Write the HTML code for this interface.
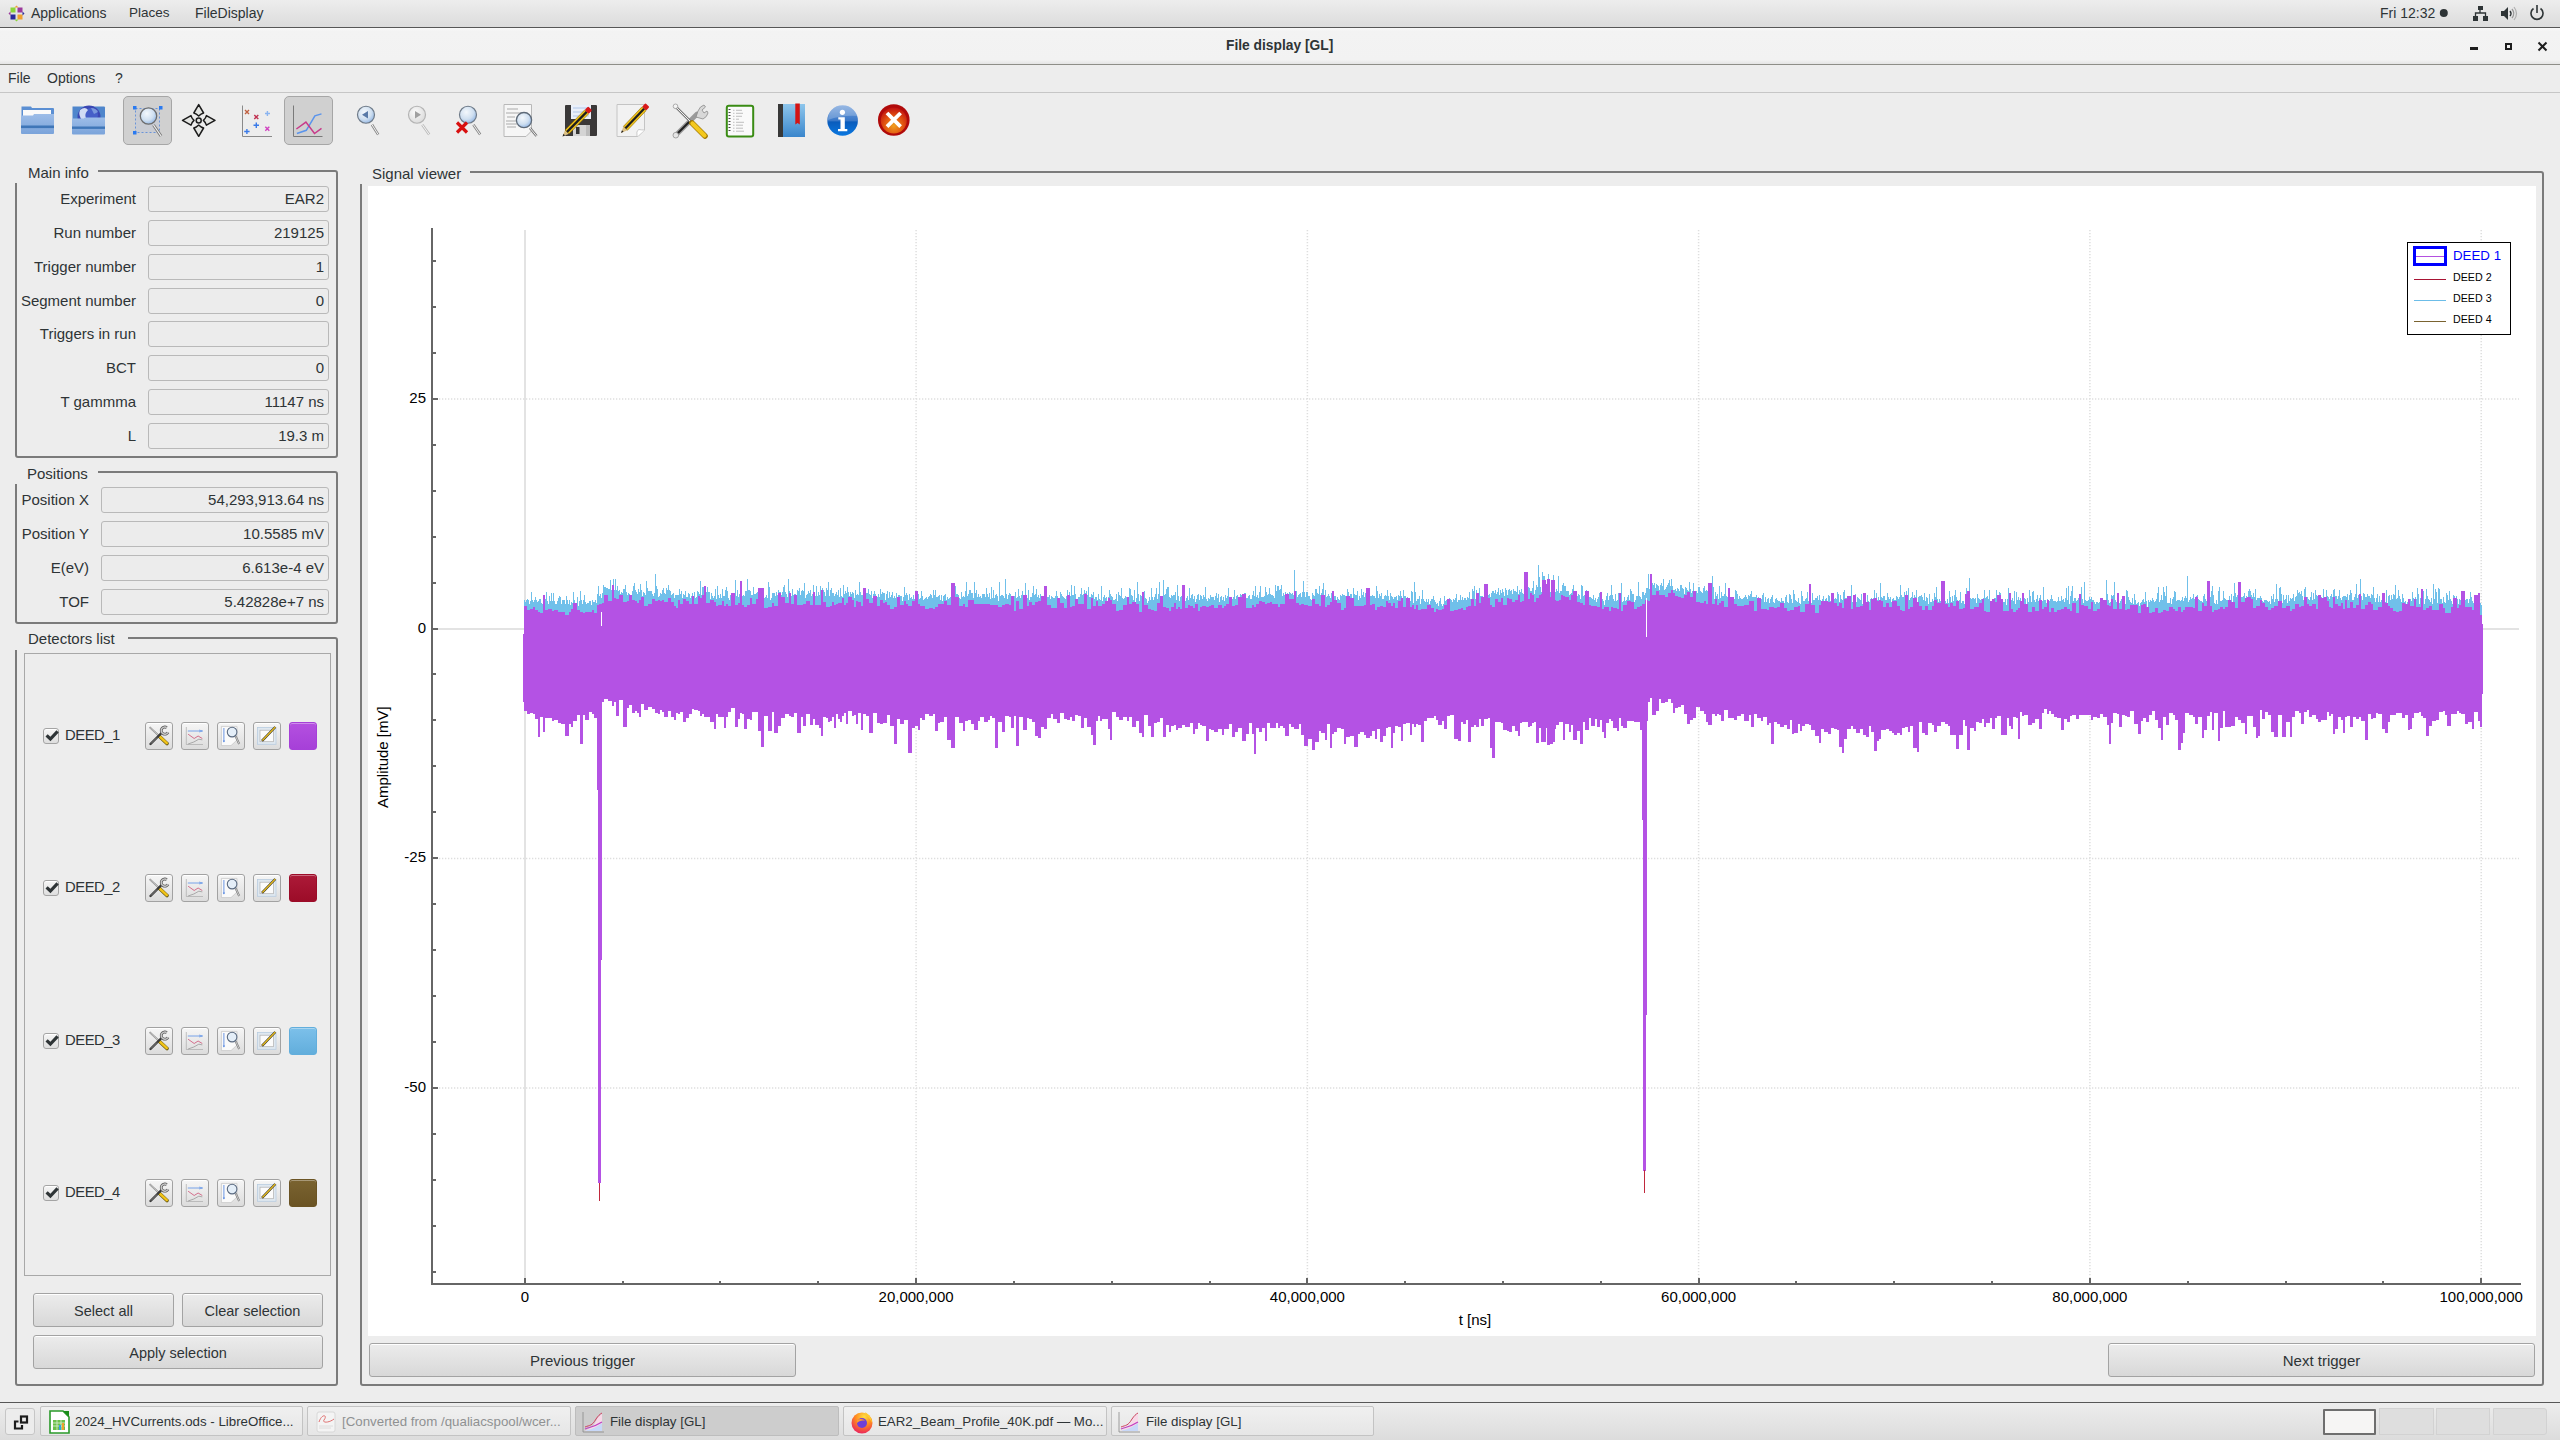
<!DOCTYPE html>
<html><head><meta charset="utf-8">
<style>
*{box-sizing:border-box;margin:0;padding:0}
html,body{width:2560px;height:1440px;overflow:hidden;background:#ededed;font-family:"Liberation Sans",sans-serif;color:#2e3436;font-size:14.5px}
.a{position:absolute}
.ui{font-size:15px}
.t{position:absolute;white-space:pre;line-height:1}
#toppanel{left:0;top:0;width:2560px;height:27px;background:linear-gradient(#ededed,#dcdcdc)}
#tpline{left:0;top:27px;width:2560px;height:1px;background:#575757}
#titlebar{left:0;top:28px;width:2560px;height:36px;background:linear-gradient(#fafafa 0,#f3f3f3 3px,#f2f2f2 32px,#e4e4e4 36px)}
#tbline{left:0;top:64px;width:2560px;height:1px;background:#8e8e88}
#mbline{left:0;top:92px;width:2560px;height:1px;background:#c6c6c6}
.gb{position:absolute;border:2px solid #7b7b7b;border-radius:3px}
.gbt{position:absolute;background:#ededed;white-space:pre;line-height:1;padding:0 0 0 0}
.fld{position:absolute;border:1px solid #b9b9b9;border-radius:3px;background:#ececec;text-align:right;padding-right:4px;white-space:pre;line-height:24px;color:#2e3436}
.lbl{position:absolute;text-align:right;white-space:pre;line-height:1}
.btn{position:absolute;border:1px solid #a3a3a3;border-radius:3px;background:linear-gradient(#ececec,#d8d8d8);box-shadow:inset 0 1px 0 #fff;text-align:center;white-space:pre;color:#2e3436}
.tb{position:absolute;border:1.5px solid #a6a6a6;border-radius:5px;background:#d0d0d0}
.sb{position:absolute;width:28px;height:28px;border:1px solid #a2a2a2;border-radius:3px;background:linear-gradient(#f6f6f6,#dcdcdc);box-shadow:inset 0 1px 0 #fff}
.cb{position:absolute;width:16px;height:16px;border:1px solid #a4a4a4;border-radius:3px;background:linear-gradient(#f6f6f6,#dedede);box-shadow:inset 0 1px 0 #fff}
.col{position:absolute;width:28px;height:28px;border-radius:3px}
.task{position:absolute;top:1408px;height:27px;border:1px solid #c3c3c3;border-radius:2px;background:linear-gradient(#f0f0f0,#e6e6e6);font-size:13.3px;white-space:pre;line-height:25px;color:#2e3436}
</style></head><body>
<!-- top panel -->
<div class="a" id="toppanel"></div>
<div class="a" id="tpline"></div>
<div class="t" style="left:31px;top:6px;font-size:14px">Applications</div>
<div class="t" style="left:129px;top:6px;font-size:13.5px">Places</div>
<div class="t" style="left:195px;top:6px;font-size:14px">FileDisplay</div>
<div class="t" style="left:2380px;top:6px;font-size:14px">Fri 12:32</div>
<!-- title bar -->
<div class="a" id="titlebar"></div>
<div class="t" style="left:1226px;top:39px;font-size:13.8px;font-weight:bold">File display [GL]</div>
<div class="a" id="tbline"></div>
<!-- menubar -->
<div class="t" style="left:8px;top:71px;font-size:14px">File</div>
<div class="t" style="left:47px;top:71px;font-size:14px">Options</div>
<div class="t" style="left:115px;top:71px;font-size:14px">?</div>
<div class="a" id="mbline"></div>
<div class="tb" style="left:123px;top:96px;width:49px;height:49px"></div>
<div class="tb" style="left:284px;top:96px;width:49px;height:49px"></div>
<svg class="a" style="left:0;top:93px" width="930" height="57" viewBox="0 93 930 57">
<defs>
<linearGradient id="fold" x1="0" y1="0" x2="0" y2="1"><stop offset="0" stop-color="#9dbde8"/><stop offset="1" stop-color="#7aa3da"/></linearGradient>
<radialGradient id="lens" cx="0.4" cy="0.35" r="0.7"><stop offset="0" stop-color="#f4f8fc"/><stop offset="0.6" stop-color="#cfdff0"/><stop offset="1" stop-color="#8fb4e4"/></radialGradient>
<radialGradient id="lensg" cx="0.4" cy="0.35" r="0.7"><stop offset="0" stop-color="#fafafa"/><stop offset="1" stop-color="#dadada"/></radialGradient>
<linearGradient id="info" x1="0" y1="0" x2="0" y2="1"><stop offset="0" stop-color="#7aa4dc"/><stop offset="0.5" stop-color="#3a78c8"/><stop offset="0.55" stop-color="#0a5cbc"/><stop offset="1" stop-color="#0a78e0"/></linearGradient>
<radialGradient id="closeg" cx="0.5" cy="0.7" r="0.7"><stop offset="0" stop-color="#f0a020"/><stop offset="0.55" stop-color="#e05010"/><stop offset="1" stop-color="#c01010"/></radialGradient>
</defs>
<!-- folder 1 -->
<path d="M21.5 106.5 H31 L32 108 H53 Q54 108 54 109 V124 H21.5Z" fill="#5b8fd3"/>
<rect x="23" y="110" width="28" height="6" fill="#fafafa"/>
<path d="M21 115.5 H33 L34 114 H54 V133 Q54 134 53 134 H22 Q21 134 21 133Z" fill="url(#fold)"/>
<rect x="21" y="125.5" width="33" height="2.6" fill="#3f76b8"/>
<!-- folder 2 globe -->
<path d="M72.5 106.5 H104 Q105 106.5 105 107.5 V120 H72.5Z" fill="#4f86cc"/>
<circle cx="89" cy="117" r="11.5" fill="#3c48b4"/><circle cx="91" cy="115" r="7" fill="#4a6ad0" fill-opacity="0.7"/>
<path d="M80 110 Q85 106 88 110 Q84 114 86 118 L82 120 Q78 115 80 110Z" fill="#d0dcf4"/>
<path d="M91 108 Q96 108 98 112 L94 114Z" fill="#7a98dc"/>
<path d="M72 118.5 H84 L85 117.5 H105 V133.5 Q105 134.5 104 134.5 H73 Q72 134.5 72 133.5Z" fill="url(#fold)"/>
<rect x="72" y="126.5" width="33" height="2.4" fill="#3f76b8"/>
<!-- zoom rect -->
<rect x="135.5" y="108.5" width="24" height="24" fill="#c6cad4" fill-opacity="0.7" stroke="#6a94d8" stroke-width="1" stroke-dasharray="2 2"/>
<rect x="133" y="106" width="3.5" height="3.5" fill="#2a7af0"/><rect x="159" y="106" width="3.5" height="3.5" fill="#2a7af0"/><rect x="133" y="131" width="3.5" height="3.5" fill="#2a7af0"/>
<path d="M153.5 125 L161 136" stroke="#777" stroke-width="3"/><path d="M153.5 125 L161 136" stroke="#f2f2f2" stroke-width="1.2"/>
<circle cx="148.5" cy="116" r="8.2" fill="url(#lens)" stroke="#6c6c6c" stroke-width="1.3"/>
<!-- move -->
<g fill="#e4e5e2" stroke="#1c1c1c" stroke-width="1.5" stroke-linejoin="round">
<path d="M198.7 104.6 L203.6 113 Q201 113.6 198.7 116 Q196.4 113.6 193.8 113Z"/>
<path d="M198.7 136.3 L203.6 128 Q201 127.4 198.7 125 Q196.4 127.4 193.8 128Z"/>
<path d="M182.5 120.4 L191 115.6 Q191.6 118.2 194 120.4 Q191.6 122.6 191 125.2Z"/>
<path d="M215 120.4 L206.4 115.6 Q205.8 118.2 203.4 120.4 Q205.8 122.6 206.4 125.2Z"/>
<circle cx="198.7" cy="120.4" r="2.5"/>
</g>
<!-- scatter -->
<path d="M242.5 105.5 V136.5 H272" stroke="#8a8a8a" stroke-width="1" fill="none"/>
<g stroke-width="1.4"><path d="M245 110 L249 114 M249 110 L245 114" stroke="#c06040"/><path d="M254.3 115 L258.3 119 M258.3 115 L254.3 119" stroke="#c03050"/><path d="M267.4 111 V116 M265 113.5 H270" stroke="#8ab4f0"/><path d="M256.3 122.5 V128 M253.5 125.25 H259" stroke="#3a7ae8"/><path d="M246.9 129 V134 M244.2 131.5 H249.6" stroke="#3a7ae8"/><path d="M265.3 126.8 L269.3 130.8 M269.3 126.8 L265.3 130.8" stroke="#d040c0"/></g>
<!-- line chart -->
<path d="M293.5 105.5 V136.5 H322.5" stroke="#7a7a7a" stroke-width="1" fill="none"/>
<path d="M296.9 133.5 L306.3 130.3 L314.9 115.9 L321.5 113.9" stroke="#5a94ec" stroke-width="1.5" fill="none"/>
<path d="M296.4 129 L305.9 122.1 L314.5 133.5 L321.5 128.4" stroke="#c83a8a" stroke-width="1.5" fill="none"/>
<!-- zoom back -->
<path d="M372 124.7 L378.2 134.6" stroke="#888" stroke-width="2.6"/><path d="M372 124.7 L378.2 134.6" stroke="#f4f4f4" stroke-width="1"/>
<circle cx="366" cy="114.75" r="8.5" fill="url(#lens)" stroke="#6e7a88" stroke-width="1.2"/>
<path d="M362 114.75 L368 111 V118.5Z" fill="#5a7aa8"/>
<!-- zoom fwd disabled -->
<path d="M422.3 124.7 L429.2 134.6" stroke="#bbb" stroke-width="2.6"/><path d="M422.3 124.7 L429.2 134.6" stroke="#f6f6f6" stroke-width="1"/>
<circle cx="417" cy="114.75" r="8.5" fill="url(#lensg)" stroke="#b4b4b4" stroke-width="1.2"/>
<path d="M421 114.75 L415 111 V118.5Z" fill="#a0a0a0"/>
<!-- zoom clear -->
<path d="M473.4 124.7 L480.2 134.6" stroke="#888" stroke-width="2.6"/><path d="M473.4 124.7 L480.2 134.6" stroke="#f4f4f4" stroke-width="1"/>
<circle cx="468" cy="114.75" r="8.5" fill="url(#lens)" stroke="#6e7a88" stroke-width="1.2"/>
<path d="M457 122.5 L467 132.5 M467 122.5 L457 132.5" stroke="#d81010" stroke-width="3.2"/>
<!-- doc zoom -->
<path d="M504 104.5 H531.5 V131 L526 136.5 H504Z" fill="#f6f6f6" stroke="#b8b8b8" stroke-width="1"/>
<g stroke="#8a8a8a" stroke-width="0.7"><path d="M507 109H518M506 113H522M507 117H515M506 121H518M506 124H517M507 127H516"/></g>
<path d="M530 128 L536.5 136" stroke="#777" stroke-width="2.6"/><path d="M530 128 L536.5 136" stroke="#eee" stroke-width="1"/>
<circle cx="524" cy="120.1" r="7.6" fill="url(#lens)" stroke="#5e6a78" stroke-width="1.3"/>
<!-- floppy pencil -->
<path d="M566 105 H596 Q597 105 597 106 V135 Q597 136 596 136 H566 Q565 136 565 135 V106 Q565 105 566 105Z" fill="#3a3838"/>
<rect x="571" y="105" width="20" height="14" fill="#eaf0fa"/>
<path d="M573 108H589M573 112H589M573 116H589" stroke="#9ab4e0" stroke-width="0.7"/>
<rect x="573" y="125" width="17" height="11" fill="#d4d4d4"/><rect x="576" y="127" width="3.5" height="7" fill="#333"/><rect x="586" y="125" width="4" height="11" fill="#bcbcbc"/>
<g transform="translate(562.5,136.5) rotate(-45.5)"><path d="M0 0 L6.5 -2.8 V2.8Z" fill="#dcc084"/><path d="M0 0 L2.6 -1.1 V1.1Z" fill="#222"/><rect x="6.5" y="-2.8" width="28" height="5.6" fill="#f2c418" stroke="#7a5a00" stroke-width="0.5"/><rect x="6.5" y="-1.1" width="28" height="2.2" fill="#1e1e1e"/><rect x="34.5" y="-2.8" width="5" height="5.6" rx="1.2" fill="#d81818"/></g>
<!-- pencil doc -->
<path d="M617 104.5 H644.5 V130 L638 136.5 H617Z" fill="#f2f2f2" stroke="#c4c4c4" stroke-width="1"/>
<path d="M637 136.5 Q636 131 638.5 129.5 Q642 130 644.5 130" fill="#ffffff" stroke="#c4c4c4" stroke-width="0.9"/>
<g transform="translate(621,133) rotate(-46.5)"><path d="M0 0 L6.5 -2.8 V2.8Z" fill="#dcc084"/><path d="M0 0 L2.6 -1.1 V1.1Z" fill="#222"/><rect x="6.5" y="-2.8" width="27" height="5.6" fill="#f2c418" stroke="#7a5a00" stroke-width="0.5"/><rect x="6.5" y="-1.1" width="27" height="2.2" fill="#1e1e1e"/><rect x="33.5" y="-2.8" width="5" height="5.6" rx="1.2" fill="#d81818"/></g>
<!-- tools -->
<path d="M676 135 L697 114" stroke="#9a9a9a" stroke-width="4.6" stroke-linecap="round"/><path d="M677 134 L690 121" stroke="#222" stroke-width="2.2"/>
<circle cx="675.8" cy="135.2" r="2.8" fill="#e6e6e6" stroke="#9a9a9a" stroke-width="0.9"/>
<path d="M696 117 L698 111 Q700 106 704 105 L705.5 107 L702 110 L704 113 L707 111 L708 113 Q707 117 703 119 Z" fill="#d8d8d8" stroke="#8a8a8a" stroke-width="0.8"/>
<path d="M675.5 106.5 L692 123" stroke="#7a7a7a" stroke-width="2.6" stroke-linecap="round"/><path d="M675.5 106.5 L692 123" stroke="#f0f0f0" stroke-width="1"/>
<circle cx="675.5" cy="106.3" r="2.3" fill="#f4f4f4" stroke="#9a9a9a" stroke-width="0.8"/>
<path d="M692 123 L705 136" stroke="#a07800" stroke-width="5.6" stroke-linecap="round"/><path d="M692.5 123.5 L704.5 135.5" stroke="#f4c81c" stroke-width="4.2" stroke-linecap="round"/>
<!-- notebook -->
<rect x="726.8" y="105.8" width="26.4" height="30.6" rx="2" fill="#fafafa" stroke="#3a8c14" stroke-width="2"/>
<g stroke="#333" stroke-width="0.9" fill="none"><path d="M728.5 109.5h2M728.5 112.5h2M728.5 115.5h2M728.5 118.5h2M728.5 121.5h2M728.5 124.5h2M728.5 127.5h2M728.5 130.5h2"/></g>
<g stroke="#777" stroke-width="0.45"><path d="M733 110.3h1.5M736 110.3h6M733 113.3h1.5M736 113.3h7M733 116.3h1.5M736 116.3h6M733 119.2h1.5M736 119.2h3M733 122.3h1.5M736 122.3h8M733 125.2h1.5M736 125.2h7M733 128.2h1.5M736 128.2h7M733 131.2h1.5M736 131.2h8"/></g>
<!-- book -->
<defs><linearGradient id="bookg" x1="0" y1="0" x2="0" y2="1"><stop offset="0" stop-color="#8ec6ec"/><stop offset="1" stop-color="#3a86cc"/></linearGradient></defs>
<rect x="778" y="104" width="27" height="33" fill="url(#bookg)"/>
<rect x="778" y="104" width="5" height="33" fill="#383838"/>
<path d="M795.3 103.5 H799.8 V124.5 L797.5 123 L795.3 124.5Z" fill="#d41414"/>
<!-- info -->
<circle cx="842.6" cy="120.5" r="15.3" fill="url(#info)"/>
<path d="M828 120 Q842 115 857.5 116 A15 15 0 0 0 828 120Z" fill="#ffffff" fill-opacity="0.22"/>
<circle cx="842.4" cy="112.3" r="2.6" fill="#fff"/>
<path d="M838.3 117.3 H844.8 V129 H847.3 V131.3 H838 V129 H840.5 V119.6 H838.3Z" fill="#fff"/>
<!-- close -->
<circle cx="893.8" cy="120" r="15.8" fill="#b00a0a"/>
<circle cx="893.8" cy="120.5" r="13" fill="url(#closeg)"/>
<path d="M887 113 L900.6 126.6 M900.6 113 L887 126.6" stroke="#fff" stroke-width="3.8"/>
</svg>

<div class="gb" style="left:15px;top:170px;width:323px;height:288px"></div>
<div class="gbt" style="left:13px;top:166px;width:85px;height:17px"></div>
<div class="t ui" style="left:28px;top:165px">Main info</div>
<div class="lbl ui" style="left:10px;width:126px;top:191px">Experiment</div>
<div class="fld ui" style="left:148px;top:186px;width:181px;height:26px">EAR2</div>
<div class="lbl ui" style="left:10px;width:126px;top:225px">Run number</div>
<div class="fld ui" style="left:148px;top:220px;width:181px;height:26px">219125</div>
<div class="lbl ui" style="left:10px;width:126px;top:259px">Trigger number</div>
<div class="fld ui" style="left:148px;top:254px;width:181px;height:26px">1</div>
<div class="lbl ui" style="left:10px;width:126px;top:293px">Segment number</div>
<div class="fld ui" style="left:148px;top:288px;width:181px;height:26px">0</div>
<div class="lbl ui" style="left:10px;width:126px;top:326px">Triggers in run</div>
<div class="fld ui" style="left:148px;top:321px;width:181px;height:26px"></div>
<div class="lbl ui" style="left:10px;width:126px;top:360px">BCT</div>
<div class="fld ui" style="left:148px;top:355px;width:181px;height:26px">0</div>
<div class="lbl ui" style="left:10px;width:126px;top:394px">T gammma</div>
<div class="fld ui" style="left:148px;top:389px;width:181px;height:26px">11147 ns</div>
<div class="lbl ui" style="left:10px;width:126px;top:428px">L</div>
<div class="fld ui" style="left:148px;top:423px;width:181px;height:26px">19.3 m</div>
<div class="gb" style="left:15px;top:471px;width:323px;height:153px"></div>
<div class="gbt" style="left:13px;top:467px;width:85px;height:17px"></div>
<div class="t ui" style="left:27px;top:466px">Positions</div>
<div class="lbl ui" style="left:10px;width:79px;top:492px">Position X</div>
<div class="fld ui" style="left:101px;top:487px;width:228px;height:26px">54,293,913.64 ns</div>
<div class="lbl ui" style="left:10px;width:79px;top:526px">Position Y</div>
<div class="fld ui" style="left:101px;top:521px;width:228px;height:26px">10.5585 mV</div>
<div class="lbl ui" style="left:10px;width:79px;top:560px">E(eV)</div>
<div class="fld ui" style="left:101px;top:555px;width:228px;height:26px">6.613e-4 eV</div>
<div class="lbl ui" style="left:10px;width:79px;top:594px">TOF</div>
<div class="fld ui" style="left:101px;top:589px;width:228px;height:26px">5.42828e+7 ns</div>
<div class="gb" style="left:15px;top:637px;width:323px;height:749px"></div>
<div class="gbt" style="left:13px;top:633px;width:115px;height:17px"></div>
<div class="t ui" style="left:28px;top:631px">Detectors list</div>
<div class="a" style="left:24px;top:653px;width:307px;height:623px;border:1px solid #a8a8a8"></div>
<div class="cb" style="left:43px;top:728px"><svg width="16" height="14" style="position:absolute;left:0;top:0;overflow:visible"><path d="M2.6 6.4 L6.4 10 L13.6 2.4" stroke="#2e3436" stroke-width="3.2" fill="none" stroke-linecap="butt" stroke-linejoin="miter"/></svg></div>
<div class="t" style="left:65px;top:728px;font-size:14.8px;letter-spacing:-0.45px">DEED_1</div>
<div class="sb" style="left:145px;top:722px"><svg width="28" height="28" style="position:absolute;left:-1px;top:-1px"><path d="M4.6 5.2 L14.8 14.6" stroke="#8a8a8a" stroke-width="1.8"/><path d="M4.6 5.2 L14.8 14.6" stroke="#eee" stroke-width="0.6"/><path d="M14.5 14.5 L22 21.5" stroke="#6a5a10" stroke-width="3.6" stroke-linecap="round"/><path d="M14.8 14.6 L21.8 21.2" stroke="#f2c418" stroke-width="2.4" stroke-linecap="round"/><path d="M5.5 22 L16.5 11" stroke="#3a3a3a" stroke-width="2.4" stroke-linecap="round"/><path d="M6 21.5 L12 15.5" stroke="#999" stroke-width="0.8"/><path d="M21.8 5.6 A3.6 3.6 0 1 0 23 10.3" stroke="#555" stroke-width="2.8" fill="none"/><path d="M21.8 5.6 A3.6 3.6 0 1 0 23 10.3" stroke="#c8c8c8" stroke-width="1.4" fill="none"/></svg>
</div>
<div class="sb" style="left:181px;top:722px"><svg width="28" height="28" style="position:absolute;left:-1px;top:-1px"><path d="M5.3 5 V22.5 H22" stroke="#aaa" stroke-width="0.7" fill="none"/><path d="M6.8 9 H21.5" stroke="#6a9ae8" stroke-width="0.9"/><path d="M18 8 L21.5 9 L18 10" stroke="#6a9ae8" stroke-width="0.7" fill="none"/><path d="M7.1 12.2 L13.2 16.5 L17.1 14 L21.3 16.5" stroke="#d06080" stroke-width="0.9" fill="none"/><path d="M7.1 22 L12.8 20 L17.8 17.2 L21.3 17.9" stroke="#999" stroke-width="0.8" fill="none"/></svg>
</div>
<div class="sb" style="left:217px;top:722px"><svg width="28" height="28" style="position:absolute;left:-1px;top:-1px"><path d="M4.4 4.4 H20 V18 L14 23.6 H4.4Z" fill="#fafafa" stroke="#c8c8c8" stroke-width="0.8"/><path d="M6.9 6 V20" stroke="#5a8ae0" stroke-width="0.9"/><path d="M5.8 18.5 L6.9 20.5 L8 18.5" fill="#5a8ae0"/><path d="M18.5 14 L22.2 22" stroke="#777" stroke-width="2"/><path d="M18.5 14 L22.2 22" stroke="#eee" stroke-width="0.7"/><circle cx="15.1" cy="10.1" r="4.8" fill="#e4eef8" stroke="#5a6a80" stroke-width="1.1"/></svg>
</div>
<div class="sb" style="left:253px;top:722px"><svg width="28" height="28" style="position:absolute;left:-1px;top:-1px"><rect x="4.5" y="5.5" width="18.5" height="16.8" fill="#dfe8f0" stroke="#b8cce0" stroke-width="0.8"/><rect x="7" y="8.2" width="13.5" height="11.5" fill="#fbfbfb" stroke="#b0b0b0" stroke-width="0.7"/><path d="M9 18.8 L22.3 5" stroke="#2a2a2a" stroke-width="2.4"/><path d="M9.3 18.5 L22.3 5" stroke="#e6bc20" stroke-width="1.4"/></svg>
</div>
<div class="col" style="left:289px;top:722px;background:linear-gradient(#b450e0,#a640d8);border:1px solid #a640d8;box-shadow:inset 0 1px 0 rgba(255,255,255,0.35)"></div>
<div class="cb" style="left:43px;top:880px"><svg width="16" height="14" style="position:absolute;left:0;top:0;overflow:visible"><path d="M2.6 6.4 L6.4 10 L13.6 2.4" stroke="#2e3436" stroke-width="3.2" fill="none" stroke-linecap="butt" stroke-linejoin="miter"/></svg></div>
<div class="t" style="left:65px;top:880px;font-size:14.8px;letter-spacing:-0.45px">DEED_2</div>
<div class="sb" style="left:145px;top:874px"><svg width="28" height="28" style="position:absolute;left:-1px;top:-1px"><path d="M4.6 5.2 L14.8 14.6" stroke="#8a8a8a" stroke-width="1.8"/><path d="M4.6 5.2 L14.8 14.6" stroke="#eee" stroke-width="0.6"/><path d="M14.5 14.5 L22 21.5" stroke="#6a5a10" stroke-width="3.6" stroke-linecap="round"/><path d="M14.8 14.6 L21.8 21.2" stroke="#f2c418" stroke-width="2.4" stroke-linecap="round"/><path d="M5.5 22 L16.5 11" stroke="#3a3a3a" stroke-width="2.4" stroke-linecap="round"/><path d="M6 21.5 L12 15.5" stroke="#999" stroke-width="0.8"/><path d="M21.8 5.6 A3.6 3.6 0 1 0 23 10.3" stroke="#555" stroke-width="2.8" fill="none"/><path d="M21.8 5.6 A3.6 3.6 0 1 0 23 10.3" stroke="#c8c8c8" stroke-width="1.4" fill="none"/></svg>
</div>
<div class="sb" style="left:181px;top:874px"><svg width="28" height="28" style="position:absolute;left:-1px;top:-1px"><path d="M5.3 5 V22.5 H22" stroke="#aaa" stroke-width="0.7" fill="none"/><path d="M6.8 9 H21.5" stroke="#6a9ae8" stroke-width="0.9"/><path d="M18 8 L21.5 9 L18 10" stroke="#6a9ae8" stroke-width="0.7" fill="none"/><path d="M7.1 12.2 L13.2 16.5 L17.1 14 L21.3 16.5" stroke="#d06080" stroke-width="0.9" fill="none"/><path d="M7.1 22 L12.8 20 L17.8 17.2 L21.3 17.9" stroke="#999" stroke-width="0.8" fill="none"/></svg>
</div>
<div class="sb" style="left:217px;top:874px"><svg width="28" height="28" style="position:absolute;left:-1px;top:-1px"><path d="M4.4 4.4 H20 V18 L14 23.6 H4.4Z" fill="#fafafa" stroke="#c8c8c8" stroke-width="0.8"/><path d="M6.9 6 V20" stroke="#5a8ae0" stroke-width="0.9"/><path d="M5.8 18.5 L6.9 20.5 L8 18.5" fill="#5a8ae0"/><path d="M18.5 14 L22.2 22" stroke="#777" stroke-width="2"/><path d="M18.5 14 L22.2 22" stroke="#eee" stroke-width="0.7"/><circle cx="15.1" cy="10.1" r="4.8" fill="#e4eef8" stroke="#5a6a80" stroke-width="1.1"/></svg>
</div>
<div class="sb" style="left:253px;top:874px"><svg width="28" height="28" style="position:absolute;left:-1px;top:-1px"><rect x="4.5" y="5.5" width="18.5" height="16.8" fill="#dfe8f0" stroke="#b8cce0" stroke-width="0.8"/><rect x="7" y="8.2" width="13.5" height="11.5" fill="#fbfbfb" stroke="#b0b0b0" stroke-width="0.7"/><path d="M9 18.8 L22.3 5" stroke="#2a2a2a" stroke-width="2.4"/><path d="M9.3 18.5 L22.3 5" stroke="#e6bc20" stroke-width="1.4"/></svg>
</div>
<div class="col" style="left:289px;top:874px;background:linear-gradient(#ac1a38,#9c0c28);border:1px solid #9c0c28;box-shadow:inset 0 1px 0 rgba(255,255,255,0.35)"></div>
<div class="cb" style="left:43px;top:1033px"><svg width="16" height="14" style="position:absolute;left:0;top:0;overflow:visible"><path d="M2.6 6.4 L6.4 10 L13.6 2.4" stroke="#2e3436" stroke-width="3.2" fill="none" stroke-linecap="butt" stroke-linejoin="miter"/></svg></div>
<div class="t" style="left:65px;top:1033px;font-size:14.8px;letter-spacing:-0.45px">DEED_3</div>
<div class="sb" style="left:145px;top:1027px"><svg width="28" height="28" style="position:absolute;left:-1px;top:-1px"><path d="M4.6 5.2 L14.8 14.6" stroke="#8a8a8a" stroke-width="1.8"/><path d="M4.6 5.2 L14.8 14.6" stroke="#eee" stroke-width="0.6"/><path d="M14.5 14.5 L22 21.5" stroke="#6a5a10" stroke-width="3.6" stroke-linecap="round"/><path d="M14.8 14.6 L21.8 21.2" stroke="#f2c418" stroke-width="2.4" stroke-linecap="round"/><path d="M5.5 22 L16.5 11" stroke="#3a3a3a" stroke-width="2.4" stroke-linecap="round"/><path d="M6 21.5 L12 15.5" stroke="#999" stroke-width="0.8"/><path d="M21.8 5.6 A3.6 3.6 0 1 0 23 10.3" stroke="#555" stroke-width="2.8" fill="none"/><path d="M21.8 5.6 A3.6 3.6 0 1 0 23 10.3" stroke="#c8c8c8" stroke-width="1.4" fill="none"/></svg>
</div>
<div class="sb" style="left:181px;top:1027px"><svg width="28" height="28" style="position:absolute;left:-1px;top:-1px"><path d="M5.3 5 V22.5 H22" stroke="#aaa" stroke-width="0.7" fill="none"/><path d="M6.8 9 H21.5" stroke="#6a9ae8" stroke-width="0.9"/><path d="M18 8 L21.5 9 L18 10" stroke="#6a9ae8" stroke-width="0.7" fill="none"/><path d="M7.1 12.2 L13.2 16.5 L17.1 14 L21.3 16.5" stroke="#d06080" stroke-width="0.9" fill="none"/><path d="M7.1 22 L12.8 20 L17.8 17.2 L21.3 17.9" stroke="#999" stroke-width="0.8" fill="none"/></svg>
</div>
<div class="sb" style="left:217px;top:1027px"><svg width="28" height="28" style="position:absolute;left:-1px;top:-1px"><path d="M4.4 4.4 H20 V18 L14 23.6 H4.4Z" fill="#fafafa" stroke="#c8c8c8" stroke-width="0.8"/><path d="M6.9 6 V20" stroke="#5a8ae0" stroke-width="0.9"/><path d="M5.8 18.5 L6.9 20.5 L8 18.5" fill="#5a8ae0"/><path d="M18.5 14 L22.2 22" stroke="#777" stroke-width="2"/><path d="M18.5 14 L22.2 22" stroke="#eee" stroke-width="0.7"/><circle cx="15.1" cy="10.1" r="4.8" fill="#e4eef8" stroke="#5a6a80" stroke-width="1.1"/></svg>
</div>
<div class="sb" style="left:253px;top:1027px"><svg width="28" height="28" style="position:absolute;left:-1px;top:-1px"><rect x="4.5" y="5.5" width="18.5" height="16.8" fill="#dfe8f0" stroke="#b8cce0" stroke-width="0.8"/><rect x="7" y="8.2" width="13.5" height="11.5" fill="#fbfbfb" stroke="#b0b0b0" stroke-width="0.7"/><path d="M9 18.8 L22.3 5" stroke="#2a2a2a" stroke-width="2.4"/><path d="M9.3 18.5 L22.3 5" stroke="#e6bc20" stroke-width="1.4"/></svg>
</div>
<div class="col" style="left:289px;top:1027px;background:linear-gradient(#7cc0ea,#62aedc);border:1px solid #62aedc;box-shadow:inset 0 1px 0 rgba(255,255,255,0.35)"></div>
<div class="cb" style="left:43px;top:1185px"><svg width="16" height="14" style="position:absolute;left:0;top:0;overflow:visible"><path d="M2.6 6.4 L6.4 10 L13.6 2.4" stroke="#2e3436" stroke-width="3.2" fill="none" stroke-linecap="butt" stroke-linejoin="miter"/></svg></div>
<div class="t" style="left:65px;top:1185px;font-size:14.8px;letter-spacing:-0.45px">DEED_4</div>
<div class="sb" style="left:145px;top:1179px"><svg width="28" height="28" style="position:absolute;left:-1px;top:-1px"><path d="M4.6 5.2 L14.8 14.6" stroke="#8a8a8a" stroke-width="1.8"/><path d="M4.6 5.2 L14.8 14.6" stroke="#eee" stroke-width="0.6"/><path d="M14.5 14.5 L22 21.5" stroke="#6a5a10" stroke-width="3.6" stroke-linecap="round"/><path d="M14.8 14.6 L21.8 21.2" stroke="#f2c418" stroke-width="2.4" stroke-linecap="round"/><path d="M5.5 22 L16.5 11" stroke="#3a3a3a" stroke-width="2.4" stroke-linecap="round"/><path d="M6 21.5 L12 15.5" stroke="#999" stroke-width="0.8"/><path d="M21.8 5.6 A3.6 3.6 0 1 0 23 10.3" stroke="#555" stroke-width="2.8" fill="none"/><path d="M21.8 5.6 A3.6 3.6 0 1 0 23 10.3" stroke="#c8c8c8" stroke-width="1.4" fill="none"/></svg>
</div>
<div class="sb" style="left:181px;top:1179px"><svg width="28" height="28" style="position:absolute;left:-1px;top:-1px"><path d="M5.3 5 V22.5 H22" stroke="#aaa" stroke-width="0.7" fill="none"/><path d="M6.8 9 H21.5" stroke="#6a9ae8" stroke-width="0.9"/><path d="M18 8 L21.5 9 L18 10" stroke="#6a9ae8" stroke-width="0.7" fill="none"/><path d="M7.1 12.2 L13.2 16.5 L17.1 14 L21.3 16.5" stroke="#d06080" stroke-width="0.9" fill="none"/><path d="M7.1 22 L12.8 20 L17.8 17.2 L21.3 17.9" stroke="#999" stroke-width="0.8" fill="none"/></svg>
</div>
<div class="sb" style="left:217px;top:1179px"><svg width="28" height="28" style="position:absolute;left:-1px;top:-1px"><path d="M4.4 4.4 H20 V18 L14 23.6 H4.4Z" fill="#fafafa" stroke="#c8c8c8" stroke-width="0.8"/><path d="M6.9 6 V20" stroke="#5a8ae0" stroke-width="0.9"/><path d="M5.8 18.5 L6.9 20.5 L8 18.5" fill="#5a8ae0"/><path d="M18.5 14 L22.2 22" stroke="#777" stroke-width="2"/><path d="M18.5 14 L22.2 22" stroke="#eee" stroke-width="0.7"/><circle cx="15.1" cy="10.1" r="4.8" fill="#e4eef8" stroke="#5a6a80" stroke-width="1.1"/></svg>
</div>
<div class="sb" style="left:253px;top:1179px"><svg width="28" height="28" style="position:absolute;left:-1px;top:-1px"><rect x="4.5" y="5.5" width="18.5" height="16.8" fill="#dfe8f0" stroke="#b8cce0" stroke-width="0.8"/><rect x="7" y="8.2" width="13.5" height="11.5" fill="#fbfbfb" stroke="#b0b0b0" stroke-width="0.7"/><path d="M9 18.8 L22.3 5" stroke="#2a2a2a" stroke-width="2.4"/><path d="M9.3 18.5 L22.3 5" stroke="#e6bc20" stroke-width="1.4"/></svg>
</div>
<div class="col" style="left:289px;top:1179px;background:linear-gradient(#7a6330,#6b5424);border:1px solid #6b5424;box-shadow:inset 0 1px 0 rgba(255,255,255,0.35)"></div>
<div class="btn" style="left:33px;top:1293px;width:141px;height:34px;line-height:34px">Select all</div>
<div class="btn" style="left:182px;top:1293px;width:141px;height:34px;line-height:34px">Clear selection</div>
<div class="btn" style="left:33px;top:1335px;width:290px;height:34px;line-height:34px">Apply selection</div>
<div class="gb" style="left:360px;top:171px;width:2184px;height:1215px"></div>
<div class="gbt" style="left:358px;top:166px;width:112px;height:18px"></div>
<div class="t ui" style="left:372px;top:166px">Signal viewer</div>
<div class="a" style="left:368px;top:186px;width:2168px;height:1150px;background:#fff"></div>
<svg class="a" style="left:0;top:0" width="2560" height="1440" viewBox="0 0 2560 1440">
<g shape-rendering="crispEdges">
<rect x="524" y="230" width="2" height="1053" fill="#e3e3e3"/>
<rect x="433" y="628" width="2086" height="2" fill="#e3e3e3"/>
</g>
<g stroke="#dedede" stroke-width="1.5" stroke-dasharray="1.3 1.7" fill="none">
<line x1="916.1" y1="230" x2="916.1" y2="1283"/>
<line x1="1307.4" y1="230" x2="1307.4" y2="1283"/>
<line x1="1698.6" y1="230" x2="1698.6" y2="1283"/>
<line x1="2089.9" y1="230" x2="2089.9" y2="1283"/>
<line x1="2481.2" y1="230" x2="2481.2" y2="1283"/>
<line x1="433" y1="399" x2="2519" y2="399"/>
<line x1="433" y1="858.4" x2="2519" y2="858.4"/>
<line x1="433" y1="1088" x2="2519" y2="1088"/>
</g>
<g shape-rendering="crispEdges">
<path fill="#70c0ea" d="M524 600.4h1V640h-1zM525 601.7h1V640h-1zM526 599.6h1V640h-1zM527 598.5h1V640h-1zM528 599.5h1V640h-1zM529 603.8h1V640h-1zM530 601.2h1V640h-1zM531 591.6h1V640h-1zM532 599.6h1V640h-1zM533 601.6h1V640h-1zM534 599.5h1V640h-1zM535 597.2h1V640h-1zM536 599.9h1V640h-1zM537 602.2h1V640h-1zM538 600.8h1V640h-1zM539 598.6h1V640h-1zM540 598.5h1V640h-1zM541 602.9h1V640h-1zM542 603.6h1V640h-1zM543 595.3h1V640h-1zM544 595.3h1V640h-1zM545 598.8h1V640h-1zM546 592.3h1V640h-1zM547 600.5h1V640h-1zM548 603.9h1V640h-1zM549 596.1h1V640h-1zM550 600.5h1V640h-1zM551 592.9h1V640h-1zM552 600.5h1V640h-1zM553 593.4h1V640h-1zM554 601.1h1V640h-1zM555 604.2h1V640h-1zM556 603.8h1V640h-1zM557 600.9h1V640h-1zM558 598.4h1V640h-1zM559 595.7h1V640h-1zM560 597.4h1V640h-1zM561 603.9h1V640h-1zM562 599.5h1V640h-1zM563 600.0h1V640h-1zM564 600.4h1V640h-1zM565 604.2h1V640h-1zM566 595.9h1V640h-1zM567 600.0h1V640h-1zM568 603.6h1V640h-1zM569 600.4h1V640h-1zM570 604.8h1V640h-1zM571 602.4h1V640h-1zM572 603.4h1V640h-1zM573 592.2h1V640h-1zM574 600.3h1V640h-1zM575 603.4h1V640h-1zM576 603.4h1V640h-1zM577 596.7h1V640h-1zM578 606.0h1V640h-1zM579 600.9h1V640h-1zM580 590.8h1V640h-1zM581 599.7h1V640h-1zM582 604.0h1V640h-1zM583 600.0h1V640h-1zM584 595.1h1V640h-1zM585 601.6h1V640h-1zM586 604.3h1V640h-1zM587 603.1h1V640h-1zM588 603.2h1V640h-1zM589 601.2h1V640h-1zM590 601.2h1V640h-1zM591 604.7h1V640h-1zM592 600.4h1V640h-1zM593 601.9h1V640h-1zM594 602.2h1V640h-1zM595 599.7h1V640h-1zM596 602.8h1V640h-1zM597 594.1h1V640h-1zM598 585.8h1V640h-1zM599 595.5h1V640h-1zM600 593.5h1V640h-1zM601 597.9h1V640h-1zM602 592.8h1V640h-1zM603 585.2h1V640h-1zM604 587.2h1V640h-1zM605 587.3h1V640h-1zM606 587.7h1V640h-1zM607 587.6h1V640h-1zM608 589.4h1V640h-1zM609 589.3h1V640h-1zM610 580.4h1V640h-1zM611 589.5h1V640h-1zM612 585.4h1V640h-1zM613 578.8h1V640h-1zM614 589.8h1V640h-1zM615 578.8h1V640h-1zM616 590.0h1V640h-1zM617 585.5h1V640h-1zM618 590.6h1V640h-1zM619 590.1h1V640h-1zM620 593.9h1V640h-1zM621 592.1h1V640h-1zM622 593.2h1V640h-1zM623 589.2h1V640h-1zM624 589.0h1V640h-1zM625 584.5h1V640h-1zM626 592.0h1V640h-1zM627 595.0h1V640h-1zM628 592.6h1V640h-1zM629 594.1h1V640h-1zM630 594.6h1V640h-1zM631 595.2h1V640h-1zM632 591.2h1V640h-1zM633 585.6h1V640h-1zM634 583.0h1V640h-1zM635 589.8h1V640h-1zM636 591.5h1V640h-1zM637 594.2h1V640h-1zM638 589.3h1V640h-1zM639 591.7h1V640h-1zM640 583.7h1V640h-1zM641 589.6h1V640h-1zM642 595.9h1V640h-1zM643 592.1h1V640h-1zM644 593.4h1V640h-1zM645 594.5h1V640h-1zM646 581.1h1V640h-1zM647 587.8h1V640h-1zM648 590.6h1V640h-1zM649 590.7h1V640h-1zM650 590.9h1V640h-1zM651 590.7h1V640h-1zM652 593.7h1V640h-1zM653 596.2h1V640h-1zM654 593.2h1V640h-1zM655 574.0h1V640h-1zM656 586.4h1V640h-1zM657 588.9h1V640h-1zM658 596.9h1V640h-1zM659 595.8h1V640h-1zM660 593.0h1V640h-1zM661 593.9h1V640h-1zM662 590.2h1V640h-1zM663 587.7h1V640h-1zM664 592.5h1V640h-1zM665 593.8h1V640h-1zM666 587.9h1V640h-1zM667 589.6h1V640h-1zM668 584.9h1V640h-1zM669 590.0h1V640h-1zM670 591.0h1V640h-1zM671 595.0h1V640h-1zM672 593.8h1V640h-1zM673 592.5h1V640h-1zM674 597.7h1V640h-1zM675 595.3h1V640h-1zM676 594.5h1V640h-1zM677 594.9h1V640h-1zM678 595.1h1V640h-1zM679 589.3h1V640h-1zM680 594.4h1V640h-1zM681 591.3h1V640h-1zM682 597.5h1V640h-1zM683 594.4h1V640h-1zM684 594.5h1V640h-1zM685 591.4h1V640h-1zM686 596.8h1V640h-1zM687 596.5h1V640h-1zM688 593.3h1V640h-1zM689 594.1h1V640h-1zM690 597.7h1V640h-1zM691 596.3h1V640h-1zM692 593.1h1V640h-1zM693 596.0h1V640h-1zM694 592.0h1V640h-1zM695 598.3h1V640h-1zM696 596.7h1V640h-1zM697 591.3h1V640h-1zM698 592.2h1V640h-1zM699 593.8h1V640h-1zM700 581.4h1V640h-1zM701 595.4h1V640h-1zM702 587.0h1V640h-1zM703 587.4h1V640h-1zM704 586.3h1V640h-1zM705 586.3h1V640h-1zM706 591.9h1V640h-1zM707 586.7h1V640h-1zM708 591.9h1V640h-1zM709 592.4h1V640h-1zM710 598.8h1V640h-1zM711 592.8h1V640h-1zM712 596.2h1V640h-1zM713 597.8h1V640h-1zM714 596.0h1V640h-1zM715 588.6h1V640h-1zM716 599.2h1V640h-1zM717 586.0h1V640h-1zM718 595.3h1V640h-1zM719 597.6h1V640h-1zM720 594.2h1V640h-1zM721 597.8h1V640h-1zM722 589.3h1V640h-1zM723 595.7h1V640h-1zM724 596.2h1V640h-1zM725 589.6h1V640h-1zM726 587.2h1V640h-1zM727 591.4h1V640h-1zM728 597.7h1V640h-1zM729 599.8h1V640h-1zM730 594.6h1V640h-1zM731 592.5h1V640h-1zM732 592.5h1V640h-1zM733 592.5h1V640h-1zM734 592.5h1V640h-1zM735 579.9h1V640h-1zM736 595.9h1V640h-1zM737 590.1h1V640h-1zM738 597.3h1V640h-1zM739 594.4h1V640h-1zM740 581.4h1V640h-1zM741 581.4h1V640h-1zM742 596.3h1V640h-1zM743 595.2h1V640h-1zM744 595.7h1V640h-1zM745 590.8h1V640h-1zM746 591.1h1V640h-1zM747 579.3h1V640h-1zM748 590.1h1V640h-1zM749 589.5h1V640h-1zM750 590.9h1V640h-1zM751 595.2h1V640h-1zM752 595.3h1V640h-1zM753 587.3h1V640h-1zM754 594.1h1V640h-1zM755 593.7h1V640h-1zM756 593.1h1V640h-1zM757 592.1h1V640h-1zM758 588.2h1V640h-1zM759 588.2h1V640h-1zM760 588.2h1V640h-1zM761 588.3h1V640h-1zM762 588.3h1V640h-1zM763 588.3h1V640h-1zM764 598.4h1V640h-1zM765 597.0h1V640h-1zM766 595.4h1V640h-1zM767 598.0h1V640h-1zM768 581.9h1V640h-1zM769 586.8h1V640h-1zM770 599.9h1V640h-1zM771 598.3h1V640h-1zM772 593.0h1V640h-1zM773 592.5h1V640h-1zM774 593.0h1V640h-1zM775 596.0h1V640h-1zM776 592.2h1V640h-1zM777 594.7h1V640h-1zM778 590.3h1V640h-1zM779 592.1h1V640h-1zM780 591.7h1V640h-1zM781 595.4h1V640h-1zM782 591.6h1V640h-1zM783 587.2h1V640h-1zM784 584.6h1V640h-1zM785 591.6h1V640h-1zM786 593.6h1V640h-1zM787 597.3h1V640h-1zM788 579.3h1V640h-1zM789 590.6h1V640h-1zM790 593.4h1V640h-1zM791 596.2h1V640h-1zM792 589.0h1V640h-1zM793 594.6h1V640h-1zM794 593.7h1V640h-1zM795 594.1h1V640h-1zM796 595.1h1V640h-1zM797 590.0h1V640h-1zM798 591.4h1V640h-1zM799 588.1h1V640h-1zM800 595.3h1V640h-1zM801 591.4h1V640h-1zM802 590.3h1V640h-1zM803 591.3h1V640h-1zM804 583.0h1V640h-1zM805 597.6h1V640h-1zM806 594.6h1V640h-1zM807 594.0h1V640h-1zM808 591.1h1V640h-1zM809 592.8h1V640h-1zM810 590.2h1V640h-1zM811 596.4h1V640h-1zM812 594.2h1V640h-1zM813 585.1h1V640h-1zM814 591.6h1V640h-1zM815 595.9h1V640h-1zM816 585.6h1V640h-1zM817 596.0h1V640h-1zM818 591.9h1V640h-1zM819 594.6h1V640h-1zM820 585.7h1V640h-1zM821 590.0h1V640h-1zM822 587.6h1V640h-1zM823 589.9h1V640h-1zM824 592.3h1V640h-1zM825 596.2h1V640h-1zM826 587.5h1V640h-1zM827 589.9h1V640h-1zM828 582.1h1V640h-1zM829 595.6h1V640h-1zM830 590.3h1V640h-1zM831 587.6h1V640h-1zM832 593.1h1V640h-1zM833 592.9h1V640h-1zM834 596.1h1V640h-1zM835 594.2h1V640h-1zM836 591.5h1V640h-1zM837 594.6h1V640h-1zM838 589.5h1V640h-1zM839 596.6h1V640h-1zM840 588.1h1V640h-1zM841 595.5h1V640h-1zM842 596.5h1V640h-1zM843 585.2h1V640h-1zM844 593.9h1V640h-1zM845 591.4h1V640h-1zM846 593.3h1V640h-1zM847 586.5h1V640h-1zM848 592.1h1V640h-1zM849 596.4h1V640h-1zM850 592.0h1V640h-1zM851 594.1h1V640h-1zM852 592.2h1V640h-1zM853 592.8h1V640h-1zM854 598.0h1V640h-1zM855 589.9h1V640h-1zM856 594.7h1V640h-1zM857 593.8h1V640h-1zM858 594.5h1V640h-1zM859 582.0h1V640h-1zM860 592.4h1V640h-1zM861 594.8h1V640h-1zM862 594.8h1V640h-1zM863 587.9h1V640h-1zM864 587.9h1V640h-1zM865 587.9h1V640h-1zM866 592.9h1V640h-1zM867 593.3h1V640h-1zM868 589.0h1V640h-1zM869 593.6h1V640h-1zM870 594.7h1V640h-1zM871 591.4h1V640h-1zM872 597.5h1V640h-1zM873 594.1h1V640h-1zM874 591.3h1V640h-1zM875 594.2h1V640h-1zM876 595.6h1V640h-1zM877 596.8h1V640h-1zM878 594.1h1V640h-1zM879 596.6h1V640h-1zM880 589.3h1V640h-1zM881 594.3h1V640h-1zM882 591.8h1V640h-1zM883 593.3h1V640h-1zM884 593.4h1V640h-1zM885 600.2h1V640h-1zM886 593.8h1V640h-1zM887 591.2h1V640h-1zM888 597.8h1V640h-1zM889 592.2h1V640h-1zM890 596.6h1V640h-1zM891 594.7h1V640h-1zM892 591.9h1V640h-1zM893 598.0h1V640h-1zM894 595.7h1V640h-1zM895 598.3h1V640h-1zM896 592.7h1V640h-1zM897 597.3h1V640h-1zM898 594.7h1V640h-1zM899 595.2h1V640h-1zM900 596.2h1V640h-1zM901 596.4h1V640h-1zM902 600.6h1V640h-1zM903 597.2h1V640h-1zM904 586.8h1V640h-1zM905 594.5h1V640h-1zM906 592.7h1V640h-1zM907 595.3h1V640h-1zM908 600.1h1V640h-1zM909 594.1h1V640h-1zM910 598.2h1V640h-1zM911 596.9h1V640h-1zM912 598.6h1V640h-1zM913 595.3h1V640h-1zM914 599.2h1V640h-1zM915 590.8h1V640h-1zM916 590.8h1V640h-1zM917 590.8h1V640h-1zM918 594.4h1V640h-1zM919 598.8h1V640h-1zM920 597.9h1V640h-1zM921 591.1h1V640h-1zM922 596.2h1V640h-1zM923 599.9h1V640h-1zM924 598.8h1V640h-1zM925 597.9h1V640h-1zM926 597.4h1V640h-1zM927 599.4h1V640h-1zM928 597.2h1V640h-1zM929 595.9h1V640h-1zM930 593.9h1V640h-1zM931 595.3h1V640h-1zM932 597.8h1V640h-1zM933 590.3h1V640h-1zM934 595.2h1V640h-1zM935 590.0h1V640h-1zM936 597.1h1V640h-1zM937 597.3h1V640h-1zM938 595.8h1V640h-1zM939 595.2h1V640h-1zM940 599.5h1V640h-1zM941 595.3h1V640h-1zM942 601.0h1V640h-1zM943 595.9h1V640h-1zM944 595.3h1V640h-1zM945 594.0h1V640h-1zM946 599.6h1V640h-1zM947 596.9h1V640h-1zM948 598.6h1V640h-1zM949 597.8h1V640h-1zM950 596.8h1V640h-1zM951 582.8h1V640h-1zM952 582.8h1V640h-1zM953 582.8h1V640h-1zM954 582.8h1V640h-1zM955 585.6h1V640h-1zM956 593.8h1V640h-1zM957 593.8h1V640h-1zM958 595.0h1V640h-1zM959 598.4h1V640h-1zM960 598.6h1V640h-1zM961 591.6h1V640h-1zM962 597.1h1V640h-1zM963 596.0h1V640h-1zM964 597.3h1V640h-1zM965 591.3h1V640h-1zM966 582.2h1V640h-1zM967 596.0h1V640h-1zM968 593.9h1V640h-1zM969 590.1h1V640h-1zM970 590.1h1V640h-1zM971 592.7h1V640h-1zM972 592.8h1V640h-1zM973 597.6h1V640h-1zM974 582.4h1V640h-1zM975 593.3h1V640h-1zM976 590.1h1V640h-1zM977 596.9h1V640h-1zM978 594.3h1V640h-1zM979 597.1h1V640h-1zM980 596.3h1V640h-1zM981 598.0h1V640h-1zM982 594.4h1V640h-1zM983 593.5h1V640h-1zM984 594.1h1V640h-1zM985 596.8h1V640h-1zM986 588.2h1V640h-1zM987 594.1h1V640h-1zM988 597.1h1V640h-1zM989 592.5h1V640h-1zM990 598.5h1V640h-1zM991 586.7h1V640h-1zM992 597.8h1V640h-1zM993 589.8h1V640h-1zM994 598.4h1V640h-1zM995 594.8h1V640h-1zM996 593.5h1V640h-1zM997 595.7h1V640h-1zM998 600.6h1V640h-1zM999 581.5h1V640h-1zM1000 596.2h1V640h-1zM1001 594.9h1V640h-1zM1002 595.3h1V640h-1zM1003 595.6h1V640h-1zM1004 597.8h1V640h-1zM1005 578.9h1V640h-1zM1006 594.2h1V640h-1zM1007 598.9h1V640h-1zM1008 594.9h1V640h-1zM1009 593.1h1V640h-1zM1010 594.1h1V640h-1zM1011 595.5h1V640h-1zM1012 595.5h1V640h-1zM1013 595.5h1V640h-1zM1014 596.2h1V640h-1zM1015 591.5h1V640h-1zM1016 598.2h1V640h-1zM1017 596.5h1V640h-1zM1018 588.5h1V640h-1zM1019 596.3h1V640h-1zM1020 597.7h1V640h-1zM1021 594.9h1V640h-1zM1022 590.8h1V640h-1zM1023 594.9h1V640h-1zM1024 594.9h1V640h-1zM1025 582.7h1V640h-1zM1026 594.9h1V640h-1zM1027 597.6h1V640h-1zM1028 589.9h1V640h-1zM1029 600.1h1V640h-1zM1030 596.9h1V640h-1zM1031 596.5h1V640h-1zM1032 592.8h1V640h-1zM1033 585.7h1V640h-1zM1034 595.0h1V640h-1zM1035 593.6h1V640h-1zM1036 589.2h1V640h-1zM1037 597.4h1V640h-1zM1038 595.3h1V640h-1zM1039 598.3h1V640h-1zM1040 594.0h1V640h-1zM1041 595.8h1V640h-1zM1042 595.8h1V640h-1zM1043 595.8h1V640h-1zM1044 586.2h1V640h-1zM1045 586.2h1V640h-1zM1046 586.2h1V640h-1zM1047 597.2h1V640h-1zM1048 597.1h1V640h-1zM1049 594.7h1V640h-1zM1050 599.1h1V640h-1zM1051 595.8h1V640h-1zM1052 597.1h1V640h-1zM1053 598.2h1V640h-1zM1054 598.0h1V640h-1zM1055 596.1h1V640h-1zM1056 591.3h1V640h-1zM1057 596.4h1V640h-1zM1058 598.1h1V640h-1zM1059 598.1h1V640h-1zM1060 591.5h1V640h-1zM1061 593.5h1V640h-1zM1062 596.1h1V640h-1zM1063 596.5h1V640h-1zM1064 598.0h1V640h-1zM1065 599.1h1V640h-1zM1066 596.4h1V640h-1zM1067 589.9h1V640h-1zM1068 595.2h1V640h-1zM1069 592.4h1V640h-1zM1070 595.7h1V640h-1zM1071 584.7h1V640h-1zM1072 595.2h1V640h-1zM1073 594.5h1V640h-1zM1074 586.1h1V640h-1zM1075 594.2h1V640h-1zM1076 599.3h1V640h-1zM1077 599.3h1V640h-1zM1078 596.9h1V640h-1zM1079 597.3h1V640h-1zM1080 594.4h1V640h-1zM1081 587.5h1V640h-1zM1082 594.9h1V640h-1zM1083 594.3h1V640h-1zM1084 590.1h1V640h-1zM1085 593.1h1V640h-1zM1086 590.9h1V640h-1zM1087 595.1h1V640h-1zM1088 586.6h1V640h-1zM1089 597.0h1V640h-1zM1090 596.7h1V640h-1zM1091 593.9h1V640h-1zM1092 594.7h1V640h-1zM1093 591.9h1V640h-1zM1094 599.1h1V640h-1zM1095 597.3h1V640h-1zM1096 596.7h1V640h-1zM1097 599.8h1V640h-1zM1098 594.2h1V640h-1zM1099 598.8h1V640h-1zM1100 599.8h1V640h-1zM1101 586.0h1V640h-1zM1102 601.0h1V640h-1zM1103 597.1h1V640h-1zM1104 594.6h1V640h-1zM1105 598.2h1V640h-1zM1106 596.7h1V640h-1zM1107 600.7h1V640h-1zM1108 597.3h1V640h-1zM1109 590.4h1V640h-1zM1110 593.9h1V640h-1zM1111 595.8h1V640h-1zM1112 596.9h1V640h-1zM1113 600.1h1V640h-1zM1114 600.3h1V640h-1zM1115 598.5h1V640h-1zM1116 593.7h1V640h-1zM1117 601.2h1V640h-1zM1118 592.2h1V640h-1zM1119 594.9h1V640h-1zM1120 595.6h1V640h-1zM1121 588.4h1V640h-1zM1122 598.4h1V640h-1zM1123 598.7h1V640h-1zM1124 598.2h1V640h-1zM1125 596.0h1V640h-1zM1126 597.3h1V640h-1zM1127 597.0h1V640h-1zM1128 597.0h1V640h-1zM1129 588.4h1V640h-1zM1130 588.9h1V640h-1zM1131 594.9h1V640h-1zM1132 596.3h1V640h-1zM1133 599.7h1V640h-1zM1134 590.0h1V640h-1zM1135 601.5h1V640h-1zM1136 597.5h1V640h-1zM1137 581.6h1V640h-1zM1138 594.1h1V640h-1zM1139 601.3h1V640h-1zM1140 595.4h1V640h-1zM1141 595.9h1V640h-1zM1142 591.6h1V640h-1zM1143 591.6h1V640h-1zM1144 591.3h1V640h-1zM1145 598.3h1V640h-1zM1146 599.2h1V640h-1zM1147 602.7h1V640h-1zM1148 601.4h1V640h-1zM1149 596.9h1V640h-1zM1150 600.0h1V640h-1zM1151 588.2h1V640h-1zM1152 597.2h1V640h-1zM1153 600.2h1V640h-1zM1154 597.4h1V640h-1zM1155 594.3h1V640h-1zM1156 588.4h1V640h-1zM1157 599.1h1V640h-1zM1158 594.0h1V640h-1zM1159 582.1h1V640h-1zM1160 596.3h1V640h-1zM1161 596.3h1V640h-1zM1162 596.3h1V640h-1zM1163 580.4h1V640h-1zM1164 595.1h1V640h-1zM1165 593.5h1V640h-1zM1166 589.0h1V640h-1zM1167 587.4h1V640h-1zM1168 586.6h1V640h-1zM1169 597.3h1V640h-1zM1170 597.6h1V640h-1zM1171 594.9h1V640h-1zM1172 596.0h1V640h-1zM1173 594.7h1V640h-1zM1174 594.8h1V640h-1zM1175 591.8h1V640h-1zM1176 600.2h1V640h-1zM1177 585.0h1V640h-1zM1178 595.8h1V640h-1zM1179 601.0h1V640h-1zM1180 597.1h1V640h-1zM1181 595.9h1V640h-1zM1182 584.6h1V640h-1zM1183 584.6h1V640h-1zM1184 584.6h1V640h-1zM1185 601.2h1V640h-1zM1186 598.3h1V640h-1zM1187 595.6h1V640h-1zM1188 599.8h1V640h-1zM1189 588.0h1V640h-1zM1190 598.3h1V640h-1zM1191 594.6h1V640h-1zM1192 594.1h1V640h-1zM1193 599.0h1V640h-1zM1194 596.4h1V640h-1zM1195 601.6h1V640h-1zM1196 599.4h1V640h-1zM1197 595.1h1V640h-1zM1198 594.3h1V640h-1zM1199 599.6h1V640h-1zM1200 595.1h1V640h-1zM1201 596.3h1V640h-1zM1202 598.6h1V640h-1zM1203 594.6h1V640h-1zM1204 597.0h1V640h-1zM1205 587.2h1V640h-1zM1206 599.1h1V640h-1zM1207 600.5h1V640h-1zM1208 597.9h1V640h-1zM1209 599.2h1V640h-1zM1210 594.6h1V640h-1zM1211 596.6h1V640h-1zM1212 596.7h1V640h-1zM1213 597.0h1V640h-1zM1214 600.1h1V640h-1zM1215 595.8h1V640h-1zM1216 592.9h1V640h-1zM1217 598.3h1V640h-1zM1218 593.6h1V640h-1zM1219 602.0h1V640h-1zM1220 596.5h1V640h-1zM1221 595.8h1V640h-1zM1222 599.6h1V640h-1zM1223 596.9h1V640h-1zM1224 601.3h1V640h-1zM1225 595.1h1V640h-1zM1226 597.8h1V640h-1zM1227 596.2h1V640h-1zM1228 588.4h1V640h-1zM1229 597.0h1V640h-1zM1230 596.7h1V640h-1zM1231 597.0h1V640h-1zM1232 598.7h1V640h-1zM1233 596.5h1V640h-1zM1234 589.7h1V640h-1zM1235 599.4h1V640h-1zM1236 595.7h1V640h-1zM1237 595.4h1V640h-1zM1238 596.5h1V640h-1zM1239 596.5h1V640h-1zM1240 593.7h1V640h-1zM1241 594.5h1V640h-1zM1242 594.0h1V640h-1zM1243 594.0h1V640h-1zM1244 592.9h1V640h-1zM1245 592.8h1V640h-1zM1246 597.8h1V640h-1zM1247 597.7h1V640h-1zM1248 595.7h1V640h-1zM1249 594.8h1V640h-1zM1250 599.3h1V640h-1zM1251 599.2h1V640h-1zM1252 595.0h1V640h-1zM1253 591.0h1V640h-1zM1254 596.3h1V640h-1zM1255 585.7h1V640h-1zM1256 596.9h1V640h-1zM1257 595.4h1V640h-1zM1258 598.4h1V640h-1zM1259 591.8h1V640h-1zM1260 585.8h1V640h-1zM1261 597.2h1V640h-1zM1262 596.7h1V640h-1zM1263 597.4h1V640h-1zM1264 596.1h1V640h-1zM1265 586.6h1V640h-1zM1266 592.1h1V640h-1zM1267 594.9h1V640h-1zM1268 594.3h1V640h-1zM1269 588.0h1V640h-1zM1270 594.1h1V640h-1zM1271 594.5h1V640h-1zM1272 594.7h1V640h-1zM1273 596.0h1V640h-1zM1274 598.0h1V640h-1zM1275 585.0h1V640h-1zM1276 590.5h1V640h-1zM1277 586.4h1V640h-1zM1278 586.0h1V640h-1zM1279 589.5h1V640h-1zM1280 588.5h1V640h-1zM1281 585.1h1V640h-1zM1282 596.4h1V640h-1zM1283 593.4h1V640h-1zM1284 594.7h1V640h-1zM1285 592.3h1V640h-1zM1286 593.5h1V640h-1zM1287 592.5h1V640h-1zM1288 594.4h1V640h-1zM1289 591.5h1V640h-1zM1290 593.1h1V640h-1zM1291 594.0h1V640h-1zM1292 592.7h1V640h-1zM1293 594.9h1V640h-1zM1294 570.2h1V640h-1zM1295 590.6h1V640h-1zM1296 590.6h1V640h-1zM1297 596.7h1V640h-1zM1298 594.7h1V640h-1zM1299 593.9h1V640h-1zM1300 592.7h1V640h-1zM1301 596.8h1V640h-1zM1302 591.7h1V640h-1zM1303 580.6h1V640h-1zM1304 592.0h1V640h-1zM1305 596.9h1V640h-1zM1306 592.4h1V640h-1zM1307 591.5h1V640h-1zM1308 595.6h1V640h-1zM1309 595.8h1V640h-1zM1310 598.5h1V640h-1zM1311 600.1h1V640h-1zM1312 593.3h1V640h-1zM1313 594.7h1V640h-1zM1314 595.8h1V640h-1zM1315 589.2h1V640h-1zM1316 588.8h1V640h-1zM1317 593.1h1V640h-1zM1318 594.4h1V640h-1zM1319 586.1h1V640h-1zM1320 594.6h1V640h-1zM1321 593.0h1V640h-1zM1322 588.5h1V640h-1zM1323 582.6h1V640h-1zM1324 595.1h1V640h-1zM1325 589.7h1V640h-1zM1326 597.0h1V640h-1zM1327 596.0h1V640h-1zM1328 594.0h1V640h-1zM1329 596.1h1V640h-1zM1330 597.5h1V640h-1zM1331 592.8h1V640h-1zM1332 590.5h1V640h-1zM1333 590.5h1V640h-1zM1334 595.8h1V640h-1zM1335 595.5h1V640h-1zM1336 599.5h1V640h-1zM1337 597.1h1V640h-1zM1338 599.2h1V640h-1zM1339 600.4h1V640h-1zM1340 595.1h1V640h-1zM1341 596.0h1V640h-1zM1342 593.7h1V640h-1zM1343 595.1h1V640h-1zM1344 594.6h1V640h-1zM1345 595.6h1V640h-1zM1346 595.7h1V640h-1zM1347 589.0h1V640h-1zM1348 591.7h1V640h-1zM1349 595.7h1V640h-1zM1350 593.5h1V640h-1zM1351 593.5h1V640h-1zM1352 597.8h1V640h-1zM1353 587.8h1V640h-1zM1354 594.2h1V640h-1zM1355 595.3h1V640h-1zM1356 595.3h1V640h-1zM1357 591.4h1V640h-1zM1358 599.7h1V640h-1zM1359 595.5h1V640h-1zM1360 598.3h1V640h-1zM1361 589.4h1V640h-1zM1362 594.9h1V640h-1zM1363 591.8h1V640h-1zM1364 596.9h1V640h-1zM1365 592.5h1V640h-1zM1366 588.2h1V640h-1zM1367 588.2h1V640h-1zM1368 588.2h1V640h-1zM1369 588.2h1V640h-1zM1370 596.2h1V640h-1zM1371 595.9h1V640h-1zM1372 594.7h1V640h-1zM1373 596.3h1V640h-1zM1374 596.3h1V640h-1zM1375 597.9h1V640h-1zM1376 585.5h1V640h-1zM1377 591.4h1V640h-1zM1378 598.0h1V640h-1zM1379 594.4h1V640h-1zM1380 596.2h1V640h-1zM1381 592.5h1V640h-1zM1382 599.3h1V640h-1zM1383 599.3h1V640h-1zM1384 596.3h1V640h-1zM1385 594.7h1V640h-1zM1386 596.0h1V640h-1zM1387 590.0h1V640h-1zM1388 596.2h1V640h-1zM1389 599.7h1V640h-1zM1390 593.0h1V640h-1zM1391 595.7h1V640h-1zM1392 596.6h1V640h-1zM1393 598.8h1V640h-1zM1394 597.4h1V640h-1zM1395 597.3h1V640h-1zM1396 595.8h1V640h-1zM1397 599.6h1V640h-1zM1398 594.9h1V640h-1zM1399 595.9h1V640h-1zM1400 590.9h1V640h-1zM1401 595.8h1V640h-1zM1402 598.2h1V640h-1zM1403 589.6h1V640h-1zM1404 595.9h1V640h-1zM1405 595.7h1V640h-1zM1406 598.2h1V640h-1zM1407 597.3h1V640h-1zM1408 598.2h1V640h-1zM1409 598.2h1V640h-1zM1410 600.5h1V640h-1zM1411 591.3h1V640h-1zM1412 592.3h1V640h-1zM1413 603.2h1V640h-1zM1414 582.0h1V640h-1zM1415 591.9h1V640h-1zM1416 600.6h1V640h-1zM1417 598.8h1V640h-1zM1418 598.9h1V640h-1zM1419 596.4h1V640h-1zM1420 603.9h1V640h-1zM1421 598.9h1V640h-1zM1422 590.3h1V640h-1zM1423 599.3h1V640h-1zM1424 601.3h1V640h-1zM1425 601.7h1V640h-1zM1426 598.6h1V640h-1zM1427 601.9h1V640h-1zM1428 599.4h1V640h-1zM1429 604.0h1V640h-1zM1430 600.8h1V640h-1zM1431 599.3h1V640h-1zM1432 598.9h1V640h-1zM1433 595.6h1V640h-1zM1434 600.0h1V640h-1zM1435 602.2h1V640h-1zM1436 603.5h1V640h-1zM1437 602.9h1V640h-1zM1438 606.3h1V640h-1zM1439 601.1h1V640h-1zM1440 597.7h1V640h-1zM1441 604.2h1V640h-1zM1442 606.4h1V640h-1zM1443 604.4h1V640h-1zM1444 595.7h1V640h-1zM1445 600.6h1V640h-1zM1446 599.5h1V640h-1zM1447 599.1h1V640h-1zM1448 599.1h1V640h-1zM1449 598.0h1V640h-1zM1450 599.0h1V640h-1zM1451 599.5h1V640h-1zM1452 602.4h1V640h-1zM1453 599.0h1V640h-1zM1454 600.4h1V640h-1zM1455 598.3h1V640h-1zM1456 594.4h1V640h-1zM1457 601.6h1V640h-1zM1458 600.1h1V640h-1zM1459 599.6h1V640h-1zM1460 594.9h1V640h-1zM1461 599.7h1V640h-1zM1462 597.2h1V640h-1zM1463 600.4h1V640h-1zM1464 598.3h1V640h-1zM1465 598.2h1V640h-1zM1466 600.3h1V640h-1zM1467 597.1h1V640h-1zM1468 598.1h1V640h-1zM1469 592.0h1V640h-1zM1470 599.2h1V640h-1zM1471 598.8h1V640h-1zM1472 589.1h1V640h-1zM1473 591.0h1V640h-1zM1474 586.4h1V640h-1zM1475 599.1h1V640h-1zM1476 590.4h1V640h-1zM1477 592.8h1V640h-1zM1478 592.8h1V640h-1zM1479 588.4h1V640h-1zM1480 596.0h1V640h-1zM1481 595.6h1V640h-1zM1482 595.9h1V640h-1zM1483 596.8h1V640h-1zM1484 584.0h1V640h-1zM1485 584.0h1V640h-1zM1486 584.0h1V640h-1zM1487 584.0h1V640h-1zM1488 595.2h1V640h-1zM1489 593.7h1V640h-1zM1490 596.9h1V640h-1zM1491 593.4h1V640h-1zM1492 590.6h1V640h-1zM1493 590.8h1V640h-1zM1494 592.9h1V640h-1zM1495 590.4h1V640h-1zM1496 594.0h1V640h-1zM1497 592.2h1V640h-1zM1498 588.3h1V640h-1zM1499 594.8h1V640h-1zM1500 589.7h1V640h-1zM1501 593.4h1V640h-1zM1502 588.6h1V640h-1zM1503 592.2h1V640h-1zM1504 596.0h1V640h-1zM1505 588.2h1V640h-1zM1506 590.1h1V640h-1zM1507 595.2h1V640h-1zM1508 589.9h1V640h-1zM1509 588.9h1V640h-1zM1510 590.6h1V640h-1zM1511 590.4h1V640h-1zM1512 594.2h1V640h-1zM1513 589.1h1V640h-1zM1514 591.2h1V640h-1zM1515 590.9h1V640h-1zM1516 591.9h1V640h-1zM1517 585.7h1V640h-1zM1518 593.6h1V640h-1zM1519 590.0h1V640h-1zM1520 592.2h1V640h-1zM1521 589.2h1V640h-1zM1522 593.0h1V640h-1zM1523 594.0h1V640h-1zM1524 571.7h1V640h-1zM1525 571.7h1V640h-1zM1526 571.7h1V640h-1zM1527 571.7h1V640h-1zM1528 586.8h1V640h-1zM1529 587.8h1V640h-1zM1530 591.1h1V640h-1zM1531 590.7h1V640h-1zM1532 587.6h1V640h-1zM1533 580.6h1V640h-1zM1534 593.5h1V640h-1zM1535 589.6h1V640h-1zM1536 584.9h1V640h-1zM1537 587.4h1V640h-1zM1538 564.6h1V640h-1zM1539 576.5h1V640h-1zM1540 586.5h1V640h-1zM1541 592.3h1V640h-1zM1542 572.0h1V640h-1zM1543 586.0h1V640h-1zM1544 583.8h1V640h-1zM1545 583.8h1V640h-1zM1546 583.8h1V640h-1zM1547 589.9h1V640h-1zM1548 581.5h1V640h-1zM1549 590.6h1V640h-1zM1550 592.4h1V640h-1zM1551 584.0h1V640h-1zM1552 594.1h1V640h-1zM1553 586.2h1V640h-1zM1554 588.2h1V640h-1zM1555 591.7h1V640h-1zM1556 589.3h1V640h-1zM1557 590.8h1V640h-1zM1558 575.8h1V640h-1zM1559 592.9h1V640h-1zM1560 591.4h1V640h-1zM1561 590.7h1V640h-1zM1562 584.5h1V640h-1zM1563 582.5h1V640h-1zM1564 586.4h1V640h-1zM1565 585.6h1V640h-1zM1566 591.2h1V640h-1zM1567 590.7h1V640h-1zM1568 590.5h1V640h-1zM1569 594.8h1V640h-1zM1570 593.9h1V640h-1zM1571 592.8h1V640h-1zM1572 589.1h1V640h-1zM1573 585.4h1V640h-1zM1574 591.2h1V640h-1zM1575 591.2h1V640h-1zM1576 591.2h1V640h-1zM1577 596.4h1V640h-1zM1578 593.8h1V640h-1zM1579 594.7h1V640h-1zM1580 598.8h1V640h-1zM1581 584.7h1V640h-1zM1582 586.4h1V640h-1zM1583 596.1h1V640h-1zM1584 595.3h1V640h-1zM1585 590.5h1V640h-1zM1586 590.0h1V640h-1zM1587 590.5h1V640h-1zM1588 590.5h1V640h-1zM1589 597.1h1V640h-1zM1590 597.1h1V640h-1zM1591 598.1h1V640h-1zM1592 599.3h1V640h-1zM1593 594.6h1V640h-1zM1594 600.2h1V640h-1zM1595 598.2h1V640h-1zM1596 601.9h1V640h-1zM1597 599.1h1V640h-1zM1598 597.2h1V640h-1zM1599 592.7h1V640h-1zM1600 592.4h1V640h-1zM1601 592.4h1V640h-1zM1602 599.2h1V640h-1zM1603 600.9h1V640h-1zM1604 604.7h1V640h-1zM1605 599.6h1V640h-1zM1606 596.0h1V640h-1zM1607 592.8h1V640h-1zM1608 599.5h1V640h-1zM1609 596.3h1V640h-1zM1610 594.6h1V640h-1zM1611 584.9h1V640h-1zM1612 594.8h1V640h-1zM1613 598.9h1V640h-1zM1614 601.0h1V640h-1zM1615 593.8h1V640h-1zM1616 600.6h1V640h-1zM1617 599.7h1V640h-1zM1618 592.9h1V640h-1zM1619 592.8h1V640h-1zM1620 592.8h1V640h-1zM1621 583.3h1V640h-1zM1622 602.1h1V640h-1zM1623 600.5h1V640h-1zM1624 597.3h1V640h-1zM1625 600.7h1V640h-1zM1626 600.0h1V640h-1zM1627 596.5h1V640h-1zM1628 594.9h1V640h-1zM1629 599.8h1V640h-1zM1630 588.7h1V640h-1zM1631 590.9h1V640h-1zM1632 594.3h1V640h-1zM1633 593.8h1V640h-1zM1634 601.6h1V640h-1zM1635 600.0h1V640h-1zM1636 595.7h1V640h-1zM1637 596.1h1V640h-1zM1638 581.8h1V640h-1zM1639 596.0h1V640h-1zM1640 596.9h1V640h-1zM1641 599.0h1V640h-1zM1642 592.2h1V640h-1zM1643 591.9h1V640h-1zM1644 595.3h1V640h-1zM1645 593.3h1V640h-1zM1646 588.3h1V640h-1zM1647 588.2h1V640h-1zM1648 574.0h1V640h-1zM1649 589.2h1V640h-1zM1650 573.5h1V640h-1zM1651 573.5h1V640h-1zM1652 582.7h1V640h-1zM1653 585.3h1V640h-1zM1654 582.7h1V640h-1zM1655 587.5h1V640h-1zM1656 583.8h1V640h-1zM1657 584.8h1V640h-1zM1658 585.7h1V640h-1zM1659 589.9h1V640h-1zM1660 584.6h1V640h-1zM1661 582.8h1V640h-1zM1662 585.5h1V640h-1zM1663 579.0h1V640h-1zM1664 589.5h1V640h-1zM1665 589.1h1V640h-1zM1666 586.7h1V640h-1zM1667 585.0h1V640h-1zM1668 583.0h1V640h-1zM1669 579.9h1V640h-1zM1670 586.4h1V640h-1zM1671 578.7h1V640h-1zM1672 586.3h1V640h-1zM1673 590.2h1V640h-1zM1674 590.4h1V640h-1zM1675 588.7h1V640h-1zM1676 591.1h1V640h-1zM1677 588.2h1V640h-1zM1678 589.4h1V640h-1zM1679 590.7h1V640h-1zM1680 584.6h1V640h-1zM1681 584.7h1V640h-1zM1682 588.4h1V640h-1zM1683 589.1h1V640h-1zM1684 593.8h1V640h-1zM1685 586.9h1V640h-1zM1686 587.9h1V640h-1zM1687 589.5h1V640h-1zM1688 590.8h1V640h-1zM1689 581.6h1V640h-1zM1690 588.6h1V640h-1zM1691 593.1h1V640h-1zM1692 591.2h1V640h-1zM1693 583.2h1V640h-1zM1694 591.3h1V640h-1zM1695 591.3h1V640h-1zM1696 591.4h1V640h-1zM1697 593.0h1V640h-1zM1698 586.8h1V640h-1zM1699 587.3h1V640h-1zM1700 591.3h1V640h-1zM1701 591.8h1V640h-1zM1702 592.9h1V640h-1zM1703 588.0h1V640h-1zM1704 586.4h1V640h-1zM1705 590.7h1V640h-1zM1706 590.1h1V640h-1zM1707 590.6h1V640h-1zM1708 582.9h1V640h-1zM1709 582.9h1V640h-1zM1710 582.9h1V640h-1zM1711 582.9h1V640h-1zM1712 575.8h1V640h-1zM1713 586.5h1V640h-1zM1714 598.5h1V640h-1zM1715 591.8h1V640h-1zM1716 595.7h1V640h-1zM1717 594.4h1V640h-1zM1718 599.2h1V640h-1zM1719 585.8h1V640h-1zM1720 597.7h1V640h-1zM1721 592.0h1V640h-1zM1722 596.0h1V640h-1zM1723 596.1h1V640h-1zM1724 594.4h1V640h-1zM1725 583.1h1V640h-1zM1726 595.9h1V640h-1zM1727 596.8h1V640h-1zM1728 588.4h1V640h-1zM1729 588.4h1V640h-1zM1730 596.5h1V640h-1zM1731 596.5h1V640h-1zM1732 596.5h1V640h-1zM1733 596.5h1V640h-1zM1734 599.4h1V640h-1zM1735 590.4h1V640h-1zM1736 591.4h1V640h-1zM1737 594.0h1V640h-1zM1738 599.0h1V640h-1zM1739 596.3h1V640h-1zM1740 598.1h1V640h-1zM1741 598.5h1V640h-1zM1742 598.5h1V640h-1zM1743 597.6h1V640h-1zM1744 597.4h1V640h-1zM1745 595.3h1V640h-1zM1746 596.5h1V640h-1zM1747 598.5h1V640h-1zM1748 595.0h1V640h-1zM1749 596.3h1V640h-1zM1750 594.2h1V640h-1zM1751 591.3h1V640h-1zM1752 597.4h1V640h-1zM1753 597.0h1V640h-1zM1754 596.7h1V640h-1zM1755 596.9h1V640h-1zM1756 595.1h1V640h-1zM1757 597.9h1V640h-1zM1758 596.6h1V640h-1zM1759 597.9h1V640h-1zM1760 597.9h1V640h-1zM1761 599.3h1V640h-1zM1762 595.3h1V640h-1zM1763 593.4h1V640h-1zM1764 601.7h1V640h-1zM1765 596.8h1V640h-1zM1766 601.9h1V640h-1zM1767 598.9h1V640h-1zM1768 597.6h1V640h-1zM1769 602.5h1V640h-1zM1770 598.9h1V640h-1zM1771 597.3h1V640h-1zM1772 595.4h1V640h-1zM1773 601.6h1V640h-1zM1774 603.2h1V640h-1zM1775 599.3h1V640h-1zM1776 597.5h1V640h-1zM1777 600.1h1V640h-1zM1778 601.3h1V640h-1zM1779 600.6h1V640h-1zM1780 602.1h1V640h-1zM1781 598.1h1V640h-1zM1782 601.1h1V640h-1zM1783 601.1h1V640h-1zM1784 602.6h1V640h-1zM1785 596.9h1V640h-1zM1786 594.7h1V640h-1zM1787 602.0h1V640h-1zM1788 602.5h1V640h-1zM1789 593.6h1V640h-1zM1790 595.3h1V640h-1zM1791 598.9h1V640h-1zM1792 602.7h1V640h-1zM1793 590.2h1V640h-1zM1794 593.6h1V640h-1zM1795 599.7h1V640h-1zM1796 600.8h1V640h-1zM1797 601.6h1V640h-1zM1798 597.8h1V640h-1zM1799 602.7h1V640h-1zM1800 603.9h1V640h-1zM1801 591.2h1V640h-1zM1802 595.5h1V640h-1zM1803 600.6h1V640h-1zM1804 601.1h1V640h-1zM1805 598.6h1V640h-1zM1806 598.2h1V640h-1zM1807 591.5h1V640h-1zM1808 600.6h1V640h-1zM1809 583.5h1V640h-1zM1810 583.5h1V640h-1zM1811 603.0h1V640h-1zM1812 593.2h1V640h-1zM1813 600.3h1V640h-1zM1814 599.6h1V640h-1zM1815 598.3h1V640h-1zM1816 597.9h1V640h-1zM1817 596.3h1V640h-1zM1818 599.5h1V640h-1zM1819 594.6h1V640h-1zM1820 599.9h1V640h-1zM1821 601.1h1V640h-1zM1822 599.4h1V640h-1zM1823 596.1h1V640h-1zM1824 600.9h1V640h-1zM1825 599.1h1V640h-1zM1826 598.3h1V640h-1zM1827 601.1h1V640h-1zM1828 594.8h1V640h-1zM1829 596.0h1V640h-1zM1830 600.9h1V640h-1zM1831 592.8h1V640h-1zM1832 592.8h1V640h-1zM1833 592.8h1V640h-1zM1834 599.0h1V640h-1zM1835 598.0h1V640h-1zM1836 598.7h1V640h-1zM1837 592.3h1V640h-1zM1838 593.6h1V640h-1zM1839 601.9h1V640h-1zM1840 594.5h1V640h-1zM1841 599.3h1V640h-1zM1842 600.4h1V640h-1zM1843 591.7h1V640h-1zM1844 589.6h1V640h-1zM1845 598.4h1V640h-1zM1846 597.8h1V640h-1zM1847 596.3h1V640h-1zM1848 596.3h1V640h-1zM1849 596.3h1V640h-1zM1850 596.3h1V640h-1zM1851 584.5h1V640h-1zM1852 602.0h1V640h-1zM1853 595.1h1V640h-1zM1854 595.1h1V640h-1zM1855 594.0h1V640h-1zM1856 602.1h1V640h-1zM1857 597.4h1V640h-1zM1858 598.3h1V640h-1zM1859 599.4h1V640h-1zM1860 600.2h1V640h-1zM1861 593.7h1V640h-1zM1862 603.8h1V640h-1zM1863 593.3h1V640h-1zM1864 593.3h1V640h-1zM1865 593.3h1V640h-1zM1866 601.5h1V640h-1zM1867 594.7h1V640h-1zM1868 600.9h1V640h-1zM1869 601.6h1V640h-1zM1870 598.8h1V640h-1zM1871 597.7h1V640h-1zM1872 599.3h1V640h-1zM1873 597.6h1V640h-1zM1874 590.1h1V640h-1zM1875 597.6h1V640h-1zM1876 592.5h1V640h-1zM1877 599.7h1V640h-1zM1878 597.3h1V640h-1zM1879 599.5h1V640h-1zM1880 582.8h1V640h-1zM1881 597.1h1V640h-1zM1882 597.7h1V640h-1zM1883 596.0h1V640h-1zM1884 596.4h1V640h-1zM1885 599.5h1V640h-1zM1886 599.7h1V640h-1zM1887 592.9h1V640h-1zM1888 597.1h1V640h-1zM1889 599.4h1V640h-1zM1890 597.2h1V640h-1zM1891 602.2h1V640h-1zM1892 598.6h1V640h-1zM1893 598.0h1V640h-1zM1894 599.5h1V640h-1zM1895 600.1h1V640h-1zM1896 596.2h1V640h-1zM1897 596.8h1V640h-1zM1898 599.0h1V640h-1zM1899 597.4h1V640h-1zM1900 584.5h1V640h-1zM1901 595.3h1V640h-1zM1902 596.5h1V640h-1zM1903 596.9h1V640h-1zM1904 591.6h1V640h-1zM1905 594.6h1V640h-1zM1906 591.3h1V640h-1zM1907 594.6h1V640h-1zM1908 588.3h1V640h-1zM1909 599.6h1V640h-1zM1910 597.9h1V640h-1zM1911 597.3h1V640h-1zM1912 591.8h1V640h-1zM1913 598.0h1V640h-1zM1914 595.1h1V640h-1zM1915 596.6h1V640h-1zM1916 589.7h1V640h-1zM1917 601.8h1V640h-1zM1918 597.2h1V640h-1zM1919 595.7h1V640h-1zM1920 596.2h1V640h-1zM1921 595.2h1V640h-1zM1922 597.1h1V640h-1zM1923 600.2h1V640h-1zM1924 593.1h1V640h-1zM1925 600.7h1V640h-1zM1926 596.5h1V640h-1zM1927 598.0h1V640h-1zM1928 603.6h1V640h-1zM1929 593.9h1V640h-1zM1930 602.4h1V640h-1zM1931 602.1h1V640h-1zM1932 598.6h1V640h-1zM1933 601.1h1V640h-1zM1934 593.3h1V640h-1zM1935 596.8h1V640h-1zM1936 586.6h1V640h-1zM1937 599.1h1V640h-1zM1938 602.3h1V640h-1zM1939 598.5h1V640h-1zM1940 600.8h1V640h-1zM1941 581.1h1V640h-1zM1942 581.1h1V640h-1zM1943 581.1h1V640h-1zM1944 581.1h1V640h-1zM1945 601.2h1V640h-1zM1946 602.5h1V640h-1zM1947 599.1h1V640h-1zM1948 602.7h1V640h-1zM1949 590.6h1V640h-1zM1950 597.4h1V640h-1zM1951 601.6h1V640h-1zM1952 596.1h1V640h-1zM1953 601.4h1V640h-1zM1954 595.3h1V640h-1zM1955 590.0h1V640h-1zM1956 597.2h1V640h-1zM1957 599.6h1V640h-1zM1958 601.0h1V640h-1zM1959 599.6h1V640h-1zM1960 592.0h1V640h-1zM1961 603.3h1V640h-1zM1962 600.7h1V640h-1zM1963 600.8h1V640h-1zM1964 603.8h1V640h-1zM1965 593.8h1V640h-1zM1966 588.4h1V640h-1zM1967 591.4h1V640h-1zM1968 591.0h1V640h-1zM1969 577.8h1V640h-1zM1970 598.4h1V640h-1zM1971 599.4h1V640h-1zM1972 597.8h1V640h-1zM1973 597.6h1V640h-1zM1974 599.0h1V640h-1zM1975 598.1h1V640h-1zM1976 603.3h1V640h-1zM1977 594.0h1V640h-1zM1978 597.7h1V640h-1zM1979 599.3h1V640h-1zM1980 600.3h1V640h-1zM1981 599.2h1V640h-1zM1982 598.5h1V640h-1zM1983 597.5h1V640h-1zM1984 589.9h1V640h-1zM1985 597.8h1V640h-1zM1986 597.3h1V640h-1zM1987 595.6h1V640h-1zM1988 598.5h1V640h-1zM1989 590.1h1V640h-1zM1990 601.2h1V640h-1zM1991 601.2h1V640h-1zM1992 598.5h1V640h-1zM1993 598.5h1V640h-1zM1994 597.6h1V640h-1zM1995 598.4h1V640h-1zM1996 590.0h1V640h-1zM1997 594.8h1V640h-1zM1998 594.8h1V640h-1zM1999 592.0h1V640h-1zM2000 592.5h1V640h-1zM2001 599.1h1V640h-1zM2002 599.1h1V640h-1zM2003 601.6h1V640h-1zM2004 601.8h1V640h-1zM2005 599.4h1V640h-1zM2006 604.5h1V640h-1zM2007 599.0h1V640h-1zM2008 588.1h1V640h-1zM2009 593.4h1V640h-1zM2010 593.4h1V640h-1zM2011 600.3h1V640h-1zM2012 598.3h1V640h-1zM2013 600.5h1V640h-1zM2014 591.3h1V640h-1zM2015 603.7h1V640h-1zM2016 592.3h1V640h-1zM2017 600.1h1V640h-1zM2018 596.6h1V640h-1zM2019 599.6h1V640h-1zM2020 597.7h1V640h-1zM2021 601.3h1V640h-1zM2022 593.4h1V640h-1zM2023 593.4h1V640h-1zM2024 598.1h1V640h-1zM2025 599.1h1V640h-1zM2026 603.6h1V640h-1zM2027 597.7h1V640h-1zM2028 602.4h1V640h-1zM2029 590.2h1V640h-1zM2030 596.0h1V640h-1zM2031 601.6h1V640h-1zM2032 591.7h1V640h-1zM2033 590.9h1V640h-1zM2034 600.4h1V640h-1zM2035 601.7h1V640h-1zM2036 598.7h1V640h-1zM2037 595.1h1V640h-1zM2038 600.5h1V640h-1zM2039 598.4h1V640h-1zM2040 595.1h1V640h-1zM2041 600.0h1V640h-1zM2042 600.9h1V640h-1zM2043 586.9h1V640h-1zM2044 600.4h1V640h-1zM2045 600.0h1V640h-1zM2046 603.3h1V640h-1zM2047 598.8h1V640h-1zM2048 599.9h1V640h-1zM2049 601.3h1V640h-1zM2050 599.0h1V640h-1zM2051 594.7h1V640h-1zM2052 598.8h1V640h-1zM2053 601.3h1V640h-1zM2054 601.3h1V640h-1zM2055 600.6h1V640h-1zM2056 602.1h1V640h-1zM2057 600.8h1V640h-1zM2058 597.4h1V640h-1zM2059 601.4h1V640h-1zM2060 600.5h1V640h-1zM2061 595.9h1V640h-1zM2062 599.6h1V640h-1zM2063 599.1h1V640h-1zM2064 601.7h1V640h-1zM2065 597.9h1V640h-1zM2066 588.2h1V640h-1zM2067 599.6h1V640h-1zM2068 585.8h1V640h-1zM2069 603.6h1V640h-1zM2070 595.6h1V640h-1zM2071 591.4h1V640h-1zM2072 585.9h1V640h-1zM2073 601.1h1V640h-1zM2074 597.8h1V640h-1zM2075 597.9h1V640h-1zM2076 601.4h1V640h-1zM2077 599.7h1V640h-1zM2078 598.1h1V640h-1zM2079 594.0h1V640h-1zM2080 594.0h1V640h-1zM2081 587.2h1V640h-1zM2082 598.6h1V640h-1zM2083 603.1h1V640h-1zM2084 582.3h1V640h-1zM2085 600.2h1V640h-1zM2086 600.7h1V640h-1zM2087 601.3h1V640h-1zM2088 600.2h1V640h-1zM2089 597.2h1V640h-1zM2090 598.8h1V640h-1zM2091 596.7h1V640h-1zM2092 600.4h1V640h-1zM2093 599.5h1V640h-1zM2094 602.0h1V640h-1zM2095 603.7h1V640h-1zM2096 601.9h1V640h-1zM2097 601.8h1V640h-1zM2098 603.3h1V640h-1zM2099 601.8h1V640h-1zM2100 598.3h1V640h-1zM2101 598.3h1V640h-1zM2102 598.3h1V640h-1zM2103 600.3h1V640h-1zM2104 599.8h1V640h-1zM2105 599.8h1V640h-1zM2106 579.9h1V640h-1zM2107 594.4h1V640h-1zM2108 599.5h1V640h-1zM2109 603.2h1V640h-1zM2110 601.6h1V640h-1zM2111 595.4h1V640h-1zM2112 596.4h1V640h-1zM2113 595.2h1V640h-1zM2114 581.6h1V640h-1zM2115 600.0h1V640h-1zM2116 601.5h1V640h-1zM2117 592.7h1V640h-1zM2118 592.7h1V640h-1zM2119 602.9h1V640h-1zM2120 600.7h1V640h-1zM2121 599.2h1V640h-1zM2122 596.4h1V640h-1zM2123 596.4h1V640h-1zM2124 596.4h1V640h-1zM2125 603.8h1V640h-1zM2126 589.6h1V640h-1zM2127 591.2h1V640h-1zM2128 596.7h1V640h-1zM2129 599.5h1V640h-1zM2130 602.0h1V640h-1zM2131 602.7h1V640h-1zM2132 597.9h1V640h-1zM2133 604.2h1V640h-1zM2134 594.4h1V640h-1zM2135 600.3h1V640h-1zM2136 603.9h1V640h-1zM2137 602.8h1V640h-1zM2138 602.2h1V640h-1zM2139 606.2h1V640h-1zM2140 603.3h1V640h-1zM2141 601.7h1V640h-1zM2142 599.6h1V640h-1zM2143 599.4h1V640h-1zM2144 602.2h1V640h-1zM2145 592.0h1V640h-1zM2146 600.7h1V640h-1zM2147 606.5h1V640h-1zM2148 599.5h1V640h-1zM2149 602.3h1V640h-1zM2150 599.9h1V640h-1zM2151 601.1h1V640h-1zM2152 597.5h1V640h-1zM2153 600.3h1V640h-1zM2154 601.9h1V640h-1zM2155 601.1h1V640h-1zM2156 599.4h1V640h-1zM2157 593.1h1V640h-1zM2158 586.8h1V640h-1zM2159 601.8h1V640h-1zM2160 600.4h1V640h-1zM2161 595.3h1V640h-1zM2162 600.1h1V640h-1zM2163 587.1h1V640h-1zM2164 591.7h1V640h-1zM2165 596.4h1V640h-1zM2166 586.2h1V640h-1zM2167 602.8h1V640h-1zM2168 603.4h1V640h-1zM2169 603.2h1V640h-1zM2170 597.6h1V640h-1zM2171 603.6h1V640h-1zM2172 598.5h1V640h-1zM2173 597.2h1V640h-1zM2174 590.6h1V640h-1zM2175 592.4h1V640h-1zM2176 601.1h1V640h-1zM2177 599.6h1V640h-1zM2178 599.5h1V640h-1zM2179 600.0h1V640h-1zM2180 600.6h1V640h-1zM2181 600.0h1V640h-1zM2182 597.2h1V640h-1zM2183 601.1h1V640h-1zM2184 597.8h1V640h-1zM2185 595.8h1V640h-1zM2186 598.3h1V640h-1zM2187 575.9h1V640h-1zM2188 601.5h1V640h-1zM2189 600.1h1V640h-1zM2190 597.0h1V640h-1zM2191 598.5h1V640h-1zM2192 598.2h1V640h-1zM2193 594.4h1V640h-1zM2194 599.3h1V640h-1zM2195 596.6h1V640h-1zM2196 595.5h1V640h-1zM2197 595.1h1V640h-1zM2198 598.9h1V640h-1zM2199 599.5h1V640h-1zM2200 601.4h1V640h-1zM2201 600.5h1V640h-1zM2202 602.0h1V640h-1zM2203 596.1h1V640h-1zM2204 593.7h1V640h-1zM2205 599.0h1V640h-1zM2206 601.3h1V640h-1zM2207 581.0h1V640h-1zM2208 581.0h1V640h-1zM2209 581.0h1V640h-1zM2210 597.3h1V640h-1zM2211 591.0h1V640h-1zM2212 586.0h1V640h-1zM2213 595.3h1V640h-1zM2214 603.1h1V640h-1zM2215 603.9h1V640h-1zM2216 599.5h1V640h-1zM2217 603.5h1V640h-1zM2218 591.4h1V640h-1zM2219 586.9h1V640h-1zM2220 600.8h1V640h-1zM2221 600.9h1V640h-1zM2222 599.5h1V640h-1zM2223 590.9h1V640h-1zM2224 597.8h1V640h-1zM2225 599.3h1V640h-1zM2226 599.9h1V640h-1zM2227 600.4h1V640h-1zM2228 599.6h1V640h-1zM2229 595.8h1V640h-1zM2230 599.6h1V640h-1zM2231 593.6h1V640h-1zM2232 601.6h1V640h-1zM2233 596.2h1V640h-1zM2234 583.4h1V640h-1zM2235 592.8h1V640h-1zM2236 597.3h1V640h-1zM2237 595.1h1V640h-1zM2238 581.8h1V640h-1zM2239 581.8h1V640h-1zM2240 581.8h1V640h-1zM2241 597.2h1V640h-1zM2242 596.9h1V640h-1zM2243 595.9h1V640h-1zM2244 593.3h1V640h-1zM2245 597.7h1V640h-1zM2246 595.9h1V640h-1zM2247 597.4h1V640h-1zM2248 591.4h1V640h-1zM2249 589.0h1V640h-1zM2250 590.5h1V640h-1zM2251 595.3h1V640h-1zM2252 596.6h1V640h-1zM2253 592.9h1V640h-1zM2254 596.9h1V640h-1zM2255 588.6h1V640h-1zM2256 599.6h1V640h-1zM2257 597.8h1V640h-1zM2258 597.5h1V640h-1zM2259 597.5h1V640h-1zM2260 595.5h1V640h-1zM2261 597.9h1V640h-1zM2262 601.4h1V640h-1zM2263 602.0h1V640h-1zM2264 599.7h1V640h-1zM2265 599.6h1V640h-1zM2266 599.8h1V640h-1zM2267 600.5h1V640h-1zM2268 602.0h1V640h-1zM2269 601.2h1V640h-1zM2270 603.7h1V640h-1zM2271 596.1h1V640h-1zM2272 599.1h1V640h-1zM2273 593.9h1V640h-1zM2274 601.8h1V640h-1zM2275 598.5h1V640h-1zM2276 583.5h1V640h-1zM2277 599.2h1V640h-1zM2278 601.4h1V640h-1zM2279 588.0h1V640h-1zM2280 587.1h1V640h-1zM2281 594.0h1V640h-1zM2282 602.5h1V640h-1zM2283 595.3h1V640h-1zM2284 600.3h1V640h-1zM2285 599.3h1V640h-1zM2286 595.3h1V640h-1zM2287 602.5h1V640h-1zM2288 595.2h1V640h-1zM2289 600.7h1V640h-1zM2290 597.5h1V640h-1zM2291 599.4h1V640h-1zM2292 598.0h1V640h-1zM2293 594.2h1V640h-1zM2294 600.5h1V640h-1zM2295 596.9h1V640h-1zM2296 596.2h1V640h-1zM2297 590.2h1V640h-1zM2298 592.7h1V640h-1zM2299 592.0h1V640h-1zM2300 594.3h1V640h-1zM2301 590.7h1V640h-1zM2302 596.4h1V640h-1zM2303 600.1h1V640h-1zM2304 589.1h1V640h-1zM2305 587.1h1V640h-1zM2306 596.6h1V640h-1zM2307 597.2h1V640h-1zM2308 598.8h1V640h-1zM2309 600.4h1V640h-1zM2310 597.0h1V640h-1zM2311 592.3h1V640h-1zM2312 599.9h1V640h-1zM2313 592.9h1V640h-1zM2314 599.2h1V640h-1zM2315 589.9h1V640h-1zM2316 595.2h1V640h-1zM2317 596.4h1V640h-1zM2318 595.0h1V640h-1zM2319 595.0h1V640h-1zM2320 595.0h1V640h-1zM2321 596.6h1V640h-1zM2322 598.4h1V640h-1zM2323 589.2h1V640h-1zM2324 596.5h1V640h-1zM2325 596.5h1V640h-1zM2326 590.1h1V640h-1zM2327 596.0h1V640h-1zM2328 597.2h1V640h-1zM2329 598.9h1V640h-1zM2330 596.3h1V640h-1zM2331 594.0h1V640h-1zM2332 596.7h1V640h-1zM2333 589.8h1V640h-1zM2334 589.2h1V640h-1zM2335 596.4h1V640h-1zM2336 595.7h1V640h-1zM2337 598.8h1V640h-1zM2338 596.0h1V640h-1zM2339 589.7h1V640h-1zM2340 598.3h1V640h-1zM2341 600.4h1V640h-1zM2342 596.6h1V640h-1zM2343 596.3h1V640h-1zM2344 595.6h1V640h-1zM2345 595.6h1V640h-1zM2346 597.1h1V640h-1zM2347 593.9h1V640h-1zM2348 600.1h1V640h-1zM2349 594.6h1V640h-1zM2350 590.0h1V640h-1zM2351 592.8h1V640h-1zM2352 600.0h1V640h-1zM2353 599.9h1V640h-1zM2354 597.3h1V640h-1zM2355 594.1h1V640h-1zM2356 584.3h1V640h-1zM2357 597.9h1V640h-1zM2358 595.0h1V640h-1zM2359 594.1h1V640h-1zM2360 578.7h1V640h-1zM2361 595.8h1V640h-1zM2362 599.6h1V640h-1zM2363 592.5h1V640h-1zM2364 593.6h1V640h-1zM2365 596.6h1V640h-1zM2366 597.2h1V640h-1zM2367 594.4h1V640h-1zM2368 595.7h1V640h-1zM2369 595.9h1V640h-1zM2370 597.9h1V640h-1zM2371 593.5h1V640h-1zM2372 595.0h1V640h-1zM2373 586.8h1V640h-1zM2374 598.4h1V640h-1zM2375 601.5h1V640h-1zM2376 598.4h1V640h-1zM2377 593.5h1V640h-1zM2378 602.1h1V640h-1zM2379 595.7h1V640h-1zM2380 601.9h1V640h-1zM2381 599.6h1V640h-1zM2382 592.6h1V640h-1zM2383 593.2h1V640h-1zM2384 593.2h1V640h-1zM2385 601.7h1V640h-1zM2386 589.5h1V640h-1zM2387 603.1h1V640h-1zM2388 595.6h1V640h-1zM2389 594.7h1V640h-1zM2390 600.1h1V640h-1zM2391 594.8h1V640h-1zM2392 599.2h1V640h-1zM2393 593.5h1V640h-1zM2394 594.5h1V640h-1zM2395 584.5h1V640h-1zM2396 599.1h1V640h-1zM2397 597.9h1V640h-1zM2398 589.9h1V640h-1zM2399 596.0h1V640h-1zM2400 599.1h1V640h-1zM2401 602.2h1V640h-1zM2402 594.1h1V640h-1zM2403 598.1h1V640h-1zM2404 602.3h1V640h-1zM2405 601.2h1V640h-1zM2406 603.5h1V640h-1zM2407 601.5h1V640h-1zM2408 599.2h1V640h-1zM2409 599.2h1V640h-1zM2410 598.8h1V640h-1zM2411 600.5h1V640h-1zM2412 591.5h1V640h-1zM2413 597.5h1V640h-1zM2414 598.9h1V640h-1zM2415 596.8h1V640h-1zM2416 599.0h1V640h-1zM2417 587.7h1V640h-1zM2418 593.6h1V640h-1zM2419 603.5h1V640h-1zM2420 597.5h1V640h-1zM2421 588.7h1V640h-1zM2422 588.7h1V640h-1zM2423 590.9h1V640h-1zM2424 604.0h1V640h-1zM2425 599.4h1V640h-1zM2426 588.5h1V640h-1zM2427 595.8h1V640h-1zM2428 598.9h1V640h-1zM2429 599.8h1V640h-1zM2430 602.3h1V640h-1zM2431 597.7h1V640h-1zM2432 603.9h1V640h-1zM2433 584.0h1V640h-1zM2434 599.3h1V640h-1zM2435 589.2h1V640h-1zM2436 592.2h1V640h-1zM2437 602.9h1V640h-1zM2438 587.7h1V640h-1zM2439 588.8h1V640h-1zM2440 598.5h1V640h-1zM2441 598.7h1V640h-1zM2442 602.6h1V640h-1zM2443 596.5h1V640h-1zM2444 601.9h1V640h-1zM2445 602.8h1V640h-1zM2446 592.9h1V640h-1zM2447 595.1h1V640h-1zM2448 600.1h1V640h-1zM2449 591.1h1V640h-1zM2450 598.6h1V640h-1zM2451 600.5h1V640h-1zM2452 604.0h1V640h-1zM2453 595.0h1V640h-1zM2454 595.8h1V640h-1zM2455 597.8h1V640h-1zM2456 596.0h1V640h-1zM2457 599.2h1V640h-1zM2458 604.3h1V640h-1zM2459 598.8h1V640h-1zM2460 599.7h1V640h-1zM2461 591.0h1V640h-1zM2462 591.0h1V640h-1zM2463 591.0h1V640h-1zM2464 591.0h1V640h-1zM2465 600.3h1V640h-1zM2466 598.5h1V640h-1zM2467 598.9h1V640h-1zM2468 602.9h1V640h-1zM2469 598.5h1V640h-1zM2470 591.8h1V640h-1zM2471 597.0h1V640h-1zM2472 601.1h1V640h-1zM2473 602.5h1V640h-1zM2474 595.4h1V640h-1zM2475 595.4h1V640h-1zM2476 595.4h1V640h-1zM2477 595.4h1V640h-1zM2478 593.0h1V640h-1zM2479 593.0h1V640h-1zM2480 603.4h1V640h-1zM2481 604.8h1V640h-1z"/>
<path fill="#b452e4" d="M523 634.0h1V702.0h-1zM524 606.4h3V711.3h-3zM527 610.4h3V714.4h-3zM530 608.8h3V713.4h-3zM533 606.6h2V714.2h-2zM535 609.8h3V718.9h-3zM538 611.8h2V736.5h-2zM540 613.0h3V716.8h-3zM543 595.3h2V732.0h-2zM545 609.7h3V717.5h-3zM548 608.5h4V717.5h-4zM552 611.4h2V721.2h-2zM554 609.9h4V719.9h-4zM558 612.0h3V723.0h-3zM561 612.1h4V723.5h-4zM565 614.7h4V735.9h-4zM569 612.2h2V723.9h-2zM571 609.0h2V727.2h-2zM573 603.4h4V720.7h-4zM577 609.6h3V714.5h-3zM580 611.6h3V743.5h-3zM583 612.6h2V714.6h-2zM585 612.1h4V719.6h-4zM589 611.9h3V711.7h-3zM592 610.4h2V713.8h-2zM594 612.9h3V717.9h-3zM597 605.0h2V710.3h-2zM599 603.7h3V706.4h-3zM602 602.8h2V701.7h-2zM604 594.8h4V699.4h-4zM608 601.1h4V700.8h-4zM612 585.4h2V705.8h-2zM614 597.5h2V701.5h-2zM616 598.7h3V716.0h-3zM619 594.6h4V699.7h-4zM623 601.5h4V726.9h-4zM627 600.7h2V708.0h-2zM629 595.2h3V705.4h-3zM632 600.0h3V713.4h-3zM635 601.3h2V710.6h-2zM637 603.1h2V712.5h-2zM639 599.6h2V716.7h-2zM641 596.7h3V704.0h-3zM644 605.5h4V709.5h-4zM648 604.2h4V706.9h-4zM652 599.3h3V708.8h-3zM655 601.3h3V713.0h-3zM658 600.4h2V713.7h-2zM660 601.1h2V709.5h-2zM662 600.4h2V711.7h-2zM664 601.7h4V717.4h-4zM668 598.0h3V711.1h-3zM671 601.9h3V717.1h-3zM674 606.3h2V720.0h-2zM676 607.6h2V713.4h-2zM678 599.7h2V714.3h-2zM680 603.6h3V712.3h-3zM683 598.9h3V721.5h-3zM686 600.7h3V717.5h-3zM689 604.2h3V713.8h-3zM692 596.0h2V709.3h-2zM694 604.1h4V709.8h-4zM698 596.4h2V711.1h-2zM700 598.1h2V715.9h-2zM702 594.7h2V713.9h-2zM704 586.3h2V716.9h-2zM706 602.5h4V717.3h-4zM710 599.5h4V721.9h-4zM714 601.8h2V728.6h-2zM716 606.2h2V714.3h-2zM718 604.9h4V716.5h-4zM722 600.7h2V717.1h-2zM724 605.9h2V728.3h-2zM726 603.9h2V717.4h-2zM728 605.8h3V712.3h-3zM731 592.5h4V708.4h-4zM735 605.3h3V726.7h-3zM738 602.9h2V718.9h-2zM740 581.4h2V712.9h-2zM742 604.9h2V714.1h-2zM744 606.7h3V728.5h-3zM747 605.2h3V718.5h-3zM750 598.4h2V720.0h-2zM752 603.6h4V711.7h-4zM756 599.3h2V711.9h-2zM758 588.2h3V731.3h-3zM761 588.3h3V747.2h-3zM764 608.2h4V715.9h-4zM768 607.1h4V730.9h-4zM772 603.4h2V711.7h-2zM774 606.2h4V733.1h-4zM778 593.1h3V726.3h-3zM781 597.0h4V717.9h-4zM785 603.0h4V713.9h-4zM789 593.4h2V716.1h-2zM791 603.7h3V717.3h-3zM794 595.1h3V712.5h-3zM797 604.5h4V733.0h-4zM801 605.0h2V717.3h-2zM803 604.1h3V725.6h-3zM806 601.3h4V714.3h-4zM810 604.7h3V724.5h-3zM813 591.6h2V718.7h-2zM815 604.6h4V725.0h-4zM819 605.1h2V728.3h-2zM821 590.0h2V736.2h-2zM823 602.3h3V717.3h-3zM826 606.5h2V717.7h-2zM828 606.7h2V722.0h-2zM830 605.9h2V720.9h-2zM832 602.0h2V716.8h-2zM834 604.6h2V728.0h-2zM836 603.6h2V713.5h-2zM838 602.5h2V718.9h-2zM840 603.2h2V722.1h-2zM842 598.3h2V715.8h-2zM844 605.1h2V712.9h-2zM846 602.8h2V723.8h-2zM848 597.2h4V710.8h-4zM852 600.2h2V716.4h-2zM854 606.8h2V715.3h-2zM856 600.6h2V724.3h-2zM858 602.3h3V712.7h-3zM861 606.4h2V730.4h-2zM863 587.9h3V714.0h-3zM866 599.2h3V715.8h-3zM869 603.3h4V733.0h-4zM873 595.6h4V712.8h-4zM877 605.9h3V723.3h-3zM880 600.2h3V724.4h-3zM883 603.0h2V723.4h-2zM885 601.9h2V723.2h-2zM887 605.0h3V715.2h-3zM890 608.9h4V726.4h-4zM894 606.8h3V744.4h-3zM897 597.3h3V719.1h-3zM900 605.0h4V723.9h-4zM904 601.2h2V719.7h-2zM906 604.1h2V719.6h-2zM908 606.3h4V752.5h-4zM912 601.3h3V727.9h-3zM915 590.8h3V726.2h-3zM918 604.2h2V730.1h-2zM920 605.8h2V717.9h-2zM922 605.8h3V720.0h-3zM925 609.2h4V713.7h-4zM929 607.5h4V715.5h-4zM933 609.0h2V714.3h-2zM935 607.0h3V731.3h-3zM938 604.4h2V723.1h-2zM940 604.1h4V722.0h-4zM944 600.6h3V716.5h-3zM947 604.5h4V739.9h-4zM951 582.8h4V748.3h-4zM955 596.8h4V717.3h-4zM959 606.0h4V722.5h-4zM963 603.5h2V730.7h-2zM965 607.3h3V721.1h-3zM968 599.5h3V720.4h-3zM971 600.4h3V724.0h-3zM974 603.5h4V730.0h-4zM978 604.3h2V720.6h-2zM980 604.2h4V717.2h-4zM984 604.1h4V722.2h-4zM988 603.6h2V720.2h-2zM990 604.6h2V715.7h-2zM992 604.9h3V718.4h-3zM995 605.0h3V748.0h-3zM998 606.6h2V722.3h-2zM1000 607.2h2V722.4h-2zM1002 604.9h3V731.8h-3zM1005 603.9h4V716.4h-4zM1009 604.8h2V716.8h-2zM1011 595.5h3V727.5h-3zM1014 610.6h2V716.1h-2zM1016 600.5h3V745.7h-3zM1019 608.8h4V716.5h-4zM1023 594.9h4V730.2h-4zM1027 606.1h2V718.4h-2zM1029 601.9h3V719.3h-3zM1032 605.4h3V722.3h-3zM1035 602.2h3V736.4h-3zM1038 601.1h3V737.5h-3zM1041 595.8h3V727.4h-3zM1044 586.2h3V729.0h-3zM1047 604.6h4V717.7h-4zM1051 607.7h2V714.2h-2zM1053 608.1h4V719.2h-4zM1057 598.1h3V722.7h-3zM1060 603.2h4V712.8h-4zM1064 608.1h3V718.5h-3zM1067 595.2h3V719.5h-3zM1070 606.8h2V717.2h-2zM1072 606.3h3V720.6h-3zM1075 599.3h3V715.1h-3zM1078 604.1h3V716.1h-3zM1081 603.5h3V728.3h-3zM1084 593.7h3V717.7h-3zM1087 609.2h4V727.0h-4zM1091 598.3h2V735.4h-2zM1093 606.2h3V745.3h-3zM1096 601.2h2V721.4h-2zM1098 606.2h2V716.1h-2zM1100 606.0h2V720.6h-2zM1102 603.9h3V718.6h-3zM1105 600.7h3V718.8h-3zM1108 598.3h2V728.7h-2zM1110 599.9h2V739.7h-2zM1112 604.3h4V712.3h-4zM1116 610.5h3V716.6h-3zM1119 610.1h4V720.3h-4zM1123 605.0h4V716.9h-4zM1127 597.0h2V720.8h-2zM1129 603.7h3V717.0h-3zM1132 601.5h4V727.4h-4zM1136 603.5h3V721.0h-3zM1139 611.6h3V733.4h-3zM1142 591.6h2V736.9h-2zM1144 604.6h4V715.4h-4zM1148 608.7h3V725.8h-3zM1151 609.5h3V736.8h-3zM1154 610.6h3V722.9h-3zM1157 603.3h3V721.9h-3zM1160 596.3h3V718.1h-3zM1163 607.4h3V736.9h-3zM1166 607.7h3V724.5h-3zM1169 610.7h2V732.4h-2zM1171 607.4h3V725.8h-3zM1174 603.4h2V725.3h-2zM1176 608.9h2V730.1h-2zM1178 606.8h2V727.8h-2zM1180 608.7h2V727.7h-2zM1182 584.6h3V724.7h-3zM1185 608.4h3V726.6h-3zM1188 605.2h2V726.5h-2zM1190 606.0h3V722.5h-3zM1193 608.1h2V733.9h-2zM1195 604.3h3V729.1h-3zM1198 611.0h2V722.8h-2zM1200 606.9h2V724.7h-2zM1202 605.5h4V725.5h-4zM1206 606.9h3V740.5h-3zM1209 605.7h2V729.2h-2zM1211 605.1h3V730.1h-3zM1214 607.5h4V732.2h-4zM1218 605.4h4V729.2h-4zM1222 608.1h2V734.8h-2zM1224 606.4h2V729.4h-2zM1226 604.2h3V729.4h-3zM1229 597.0h3V724.4h-3zM1232 606.4h3V736.9h-3zM1235 605.4h3V731.6h-3zM1238 596.5h4V727.6h-4zM1242 594.0h4V740.6h-4zM1246 608.1h3V733.7h-3zM1249 607.8h3V722.6h-3zM1252 604.6h2V734.0h-2zM1254 606.6h2V753.9h-2zM1256 604.1h3V728.2h-3zM1259 601.4h3V731.8h-3zM1262 602.3h3V727.5h-3zM1265 603.9h2V740.7h-2zM1267 602.7h3V722.5h-3zM1270 601.5h2V728.0h-2zM1272 604.1h4V727.8h-4zM1276 603.8h2V723.1h-2zM1278 607.4h2V727.5h-2zM1280 603.7h3V726.1h-3zM1283 604.2h2V728.2h-2zM1285 594.4h4V735.5h-4zM1289 598.8h2V724.2h-2zM1291 598.9h3V727.2h-3zM1294 590.6h2V729.3h-2zM1296 602.6h3V729.4h-3zM1299 604.6h2V723.6h-2zM1301 604.3h3V735.2h-3zM1304 604.6h4V745.5h-4zM1308 605.9h4V738.5h-4zM1312 599.0h3V750.4h-3zM1315 603.7h4V741.8h-4zM1319 606.4h2V730.6h-2zM1321 595.1h4V732.7h-4zM1325 607.0h2V740.1h-2zM1327 604.6h3V724.4h-3zM1330 601.7h2V747.5h-2zM1332 590.5h2V733.7h-2zM1334 599.8h3V732.2h-3zM1337 603.0h4V728.1h-4zM1341 609.7h3V728.9h-3zM1344 607.9h2V744.1h-2zM1346 595.7h4V736.9h-4zM1350 598.3h4V736.4h-4zM1354 606.0h4V746.8h-4zM1358 606.2h2V734.2h-2zM1360 605.7h4V731.8h-4zM1364 605.3h2V734.8h-2zM1366 588.2h4V738.3h-4zM1370 605.3h2V735.8h-2zM1372 603.8h3V730.5h-3zM1375 609.5h2V738.9h-2zM1377 607.4h3V729.2h-3zM1380 605.9h3V742.0h-3zM1383 606.6h3V735.6h-3zM1386 600.6h2V728.4h-2zM1388 602.5h3V726.7h-3zM1391 605.5h2V748.2h-2zM1393 603.1h2V733.3h-2zM1395 607.5h3V726.2h-3zM1398 600.9h3V726.7h-3zM1401 598.4h2V741.3h-2zM1403 607.2h3V723.7h-3zM1406 598.2h4V722.6h-4zM1410 607.4h2V735.3h-2zM1412 605.4h2V723.7h-2zM1414 609.0h2V727.4h-2zM1416 604.9h2V724.4h-2zM1418 609.6h3V724.8h-3zM1421 609.2h3V741.9h-3zM1424 608.8h3V721.4h-3zM1427 604.7h4V717.7h-4zM1431 608.3h3V717.5h-3zM1434 612.0h2V715.8h-2zM1436 608.8h2V719.9h-2zM1438 610.3h4V725.0h-4zM1442 608.8h2V720.9h-2zM1444 604.7h3V729.2h-3zM1447 599.1h3V715.8h-3zM1450 610.7h4V714.8h-4zM1454 610.2h4V739.1h-4zM1458 609.1h3V741.4h-3zM1461 607.8h2V721.6h-2zM1463 609.5h3V724.1h-3zM1466 607.3h2V719.7h-2zM1468 605.9h3V742.3h-3zM1471 598.8h3V726.8h-3zM1474 606.2h2V725.2h-2zM1476 592.8h3V726.7h-3zM1479 603.1h2V719.2h-2zM1481 596.8h3V726.2h-3zM1484 584.0h4V718.6h-4zM1488 598.2h2V718.4h-2zM1490 604.8h2V747.9h-2zM1492 606.6h3V758.2h-3zM1495 599.0h3V722.0h-3zM1498 602.4h3V722.2h-3zM1501 598.2h2V723.2h-2zM1503 605.2h4V730.2h-4zM1507 598.0h2V730.7h-2zM1509 599.1h3V732.3h-3zM1512 601.6h3V725.6h-3zM1515 599.5h3V730.6h-3zM1518 595.4h2V735.5h-2zM1520 602.1h2V723.3h-2zM1522 601.1h2V722.1h-2zM1524 571.7h4V722.2h-4zM1528 598.9h2V727.0h-2zM1530 593.3h2V726.4h-2zM1532 594.7h2V722.9h-2zM1534 601.5h2V721.5h-2zM1536 597.9h3V742.5h-3zM1539 595.0h2V727.5h-2zM1541 593.8h3V727.7h-3zM1544 583.8h3V727.9h-3zM1547 598.3h3V722.2h-3zM1550 597.1h3V744.1h-3zM1553 599.9h3V728.8h-3zM1556 600.5h3V725.4h-3zM1559 600.0h2V722.3h-2zM1561 595.0h2V721.5h-2zM1563 596.3h2V739.9h-2zM1565 597.0h4V723.6h-4zM1569 600.1h2V732.3h-2zM1571 594.8h2V724.9h-2zM1573 591.2h4V739.6h-4zM1577 602.3h3V731.4h-3zM1580 603.1h3V744.3h-3zM1583 605.4h2V721.5h-2zM1585 590.5h4V729.6h-4zM1589 604.5h2V717.8h-2zM1591 606.2h4V725.6h-4zM1595 606.3h2V719.2h-2zM1597 607.2h3V726.5h-3zM1600 592.4h2V719.8h-2zM1602 609.1h2V732.1h-2zM1604 606.7h2V737.9h-2zM1606 606.9h3V722.8h-3zM1609 611.0h2V719.3h-2zM1611 606.7h2V720.9h-2zM1613 607.6h4V728.2h-4zM1617 609.3h2V731.0h-2zM1619 592.8h2V718.4h-2zM1621 610.5h2V725.5h-2zM1623 604.7h4V728.0h-4zM1627 601.1h4V721.3h-4zM1631 601.9h3V720.8h-3zM1634 608.7h3V722.4h-3zM1637 607.3h3V721.8h-3zM1640 606.2h2V730.1h-2zM1642 604.4h3V732.8h-3zM1645 600.4h3V720.6h-3zM1648 601.0h2V702.2h-2zM1650 573.5h2V697.7h-2zM1652 594.7h4V715.3h-4zM1656 591.4h3V711.3h-3zM1659 594.7h2V699.1h-2zM1661 595.4h4V702.8h-4zM1665 596.7h3V702.4h-3zM1668 592.5h3V699.4h-3zM1671 589.9h2V703.3h-2zM1673 592.7h2V713.0h-2zM1675 596.2h3V708.0h-3zM1678 596.7h3V707.2h-3zM1681 597.8h3V704.6h-3zM1684 595.4h3V713.9h-3zM1687 592.2h3V724.3h-3zM1690 597.3h3V719.6h-3zM1693 591.3h3V717.9h-3zM1696 601.7h4V706.5h-4zM1700 603.4h4V711.3h-4zM1704 601.0h2V713.8h-2zM1706 604.3h2V721.6h-2zM1708 582.9h4V725.0h-4zM1712 604.3h3V714.3h-3zM1715 599.1h2V715.5h-2zM1717 605.4h2V713.7h-2zM1719 603.4h2V715.1h-2zM1721 601.1h3V720.9h-3zM1724 607.0h4V710.0h-4zM1728 588.4h2V717.9h-2zM1730 596.5h4V718.0h-4zM1734 604.1h3V719.7h-3zM1737 605.5h4V715.9h-4zM1741 605.6h3V713.7h-3zM1744 604.7h3V721.1h-3zM1747 605.1h2V721.0h-2zM1749 600.8h2V714.6h-2zM1751 600.9h3V726.9h-3zM1754 611.4h3V713.8h-3zM1757 597.9h4V717.7h-4zM1761 609.4h2V720.8h-2zM1763 608.6h4V717.4h-4zM1767 609.5h2V724.9h-2zM1769 606.6h2V722.5h-2zM1771 607.4h3V744.0h-3zM1774 607.6h3V722.1h-3zM1777 606.8h3V723.6h-3zM1780 603.0h4V726.9h-4zM1784 607.9h3V724.5h-3zM1787 610.9h3V729.3h-3zM1790 610.1h2V720.4h-2zM1792 610.4h2V734.3h-2zM1794 607.1h4V732.9h-4zM1798 605.6h2V724.2h-2zM1800 611.9h2V731.4h-2zM1802 611.6h3V726.2h-3zM1805 604.2h4V723.8h-4zM1809 583.5h2V724.7h-2zM1811 604.6h4V729.8h-4zM1815 612.5h4V736.3h-4zM1819 604.9h2V743.2h-2zM1821 601.1h3V728.5h-3zM1824 601.1h4V731.6h-4zM1828 601.8h3V734.0h-3zM1831 592.8h3V727.5h-3zM1834 602.7h3V729.0h-3zM1837 606.4h2V729.9h-2zM1839 603.3h3V746.8h-3zM1842 607.8h2V752.7h-2zM1844 599.4h3V738.6h-3zM1847 596.3h4V729.2h-4zM1851 609.1h2V726.4h-2zM1853 595.1h3V729.4h-3zM1856 606.7h4V732.7h-4zM1860 605.8h3V728.5h-3zM1863 593.3h3V734.8h-3zM1866 601.5h3V736.5h-3zM1869 609.5h2V726.2h-2zM1871 599.3h3V732.3h-3zM1874 597.6h3V751.3h-3zM1877 601.4h2V741.2h-2zM1879 599.5h2V739.0h-2zM1881 601.3h2V729.8h-2zM1883 607.2h3V730.0h-3zM1886 602.8h3V728.7h-3zM1889 607.2h3V731.0h-3zM1892 601.1h2V733.2h-2zM1894 600.6h3V735.3h-3zM1897 605.5h3V732.6h-3zM1900 609.6h2V734.7h-2zM1902 611.0h3V727.9h-3zM1905 594.6h3V727.2h-3zM1908 609.0h2V731.5h-2zM1910 606.5h3V725.5h-3zM1913 598.3h4V747.9h-4zM1917 602.1h2V752.1h-2zM1919 605.8h3V721.9h-3zM1922 610.4h3V732.5h-3zM1925 606.3h3V734.6h-3zM1928 610.1h4V723.2h-4zM1932 605.8h2V725.1h-2zM1934 600.4h3V731.9h-3zM1937 602.7h4V726.1h-4zM1941 581.1h4V722.2h-4zM1945 604.0h3V724.4h-3zM1948 607.0h2V725.7h-2zM1950 602.7h3V734.7h-3zM1953 605.5h3V734.5h-3zM1956 601.3h3V748.9h-3zM1959 609.1h4V734.9h-4zM1963 608.1h2V720.0h-2zM1965 593.8h2V725.5h-2zM1967 591.4h3V749.5h-3zM1970 609.0h4V728.4h-4zM1974 607.1h2V731.0h-2zM1976 607.0h3V722.4h-3zM1979 603.2h3V723.1h-3zM1982 598.5h2V719.1h-2zM1984 611.3h2V727.0h-2zM1986 611.7h4V723.3h-4zM1990 601.2h2V717.9h-2zM1992 598.5h3V729.4h-3zM1995 602.1h2V717.8h-2zM1997 594.8h4V716.1h-4zM2001 599.1h2V735.1h-2zM2003 610.5h4V735.2h-4zM2007 611.2h2V717.9h-2zM2009 593.4h2V725.8h-2zM2011 608.7h2V729.1h-2zM2013 611.6h3V717.2h-3zM2016 610.3h2V717.5h-2zM2018 607.7h2V738.7h-2zM2020 601.3h2V712.4h-2zM2022 593.4h2V715.9h-2zM2024 603.9h4V714.7h-4zM2028 611.7h4V725.1h-4zM2032 607.3h3V723.3h-3zM2035 611.0h4V719.2h-4zM2039 600.4h3V729.2h-3zM2042 608.5h2V712.9h-2zM2044 606.9h3V708.8h-3zM2047 599.9h2V713.9h-2zM2049 611.5h2V710.5h-2zM2051 607.6h3V713.5h-3zM2054 612.2h3V717.2h-3zM2057 610.4h4V717.9h-4zM2061 608.8h3V730.3h-3zM2064 607.2h3V718.7h-3zM2067 609.3h3V721.6h-3zM2070 610.5h2V716.4h-2zM2072 602.7h4V714.8h-4zM2076 613.2h3V719.3h-3zM2079 594.0h2V715.3h-2zM2081 605.2h3V714.8h-3zM2084 606.1h4V714.6h-4zM2088 609.3h3V714.8h-3zM2091 601.9h2V719.6h-2zM2093 610.8h4V717.2h-4zM2097 609.4h3V718.4h-3zM2100 598.3h3V713.9h-3zM2103 600.3h4V716.5h-4zM2107 605.4h2V724.8h-2zM2109 606.2h2V744.0h-2zM2111 599.0h2V722.8h-2zM2113 608.6h4V713.4h-4zM2117 592.7h2V714.3h-2zM2119 608.6h3V727.3h-3zM2122 596.4h3V715.0h-3zM2125 609.6h2V716.2h-2zM2127 608.5h3V716.5h-3zM2130 604.8h4V711.3h-4zM2134 604.8h4V724.1h-4zM2138 612.5h3V733.7h-3zM2141 605.2h2V721.0h-2zM2143 603.7h3V717.7h-3zM2146 607.0h3V722.1h-3zM2149 612.9h3V715.1h-3zM2152 612.1h3V711.0h-3zM2155 608.4h3V720.1h-3zM2158 613.0h3V728.0h-3zM2161 612.4h2V739.9h-2zM2163 609.8h3V717.0h-3zM2166 610.7h3V724.7h-3zM2169 606.9h4V712.9h-4zM2173 609.3h2V715.3h-2zM2175 610.8h3V720.2h-3zM2178 606.8h3V750.1h-3zM2181 612.4h2V742.9h-2zM2183 609.9h2V733.0h-2zM2185 606.8h4V713.2h-4zM2189 606.7h4V714.9h-4zM2193 608.4h2V716.9h-2zM2195 596.6h3V723.9h-3zM2198 611.0h4V716.5h-4zM2202 602.5h2V738.4h-2zM2204 606.2h3V730.2h-3zM2207 581.0h3V715.9h-3zM2210 606.4h2V712.0h-2zM2212 611.7h2V730.1h-2zM2214 609.6h4V712.5h-4zM2218 609.4h2V741.4h-2zM2220 607.1h3V727.7h-3zM2223 608.5h2V711.0h-2zM2225 606.8h3V726.7h-3zM2228 599.6h3V727.4h-3zM2231 602.0h4V725.9h-4zM2235 608.0h3V716.9h-3zM2238 581.8h3V720.0h-3zM2241 601.5h4V723.4h-4zM2245 597.7h2V733.8h-2zM2247 597.4h4V716.2h-4zM2251 599.2h2V716.3h-2zM2253 608.1h3V727.4h-3zM2256 606.1h2V738.1h-2zM2258 606.0h2V735.8h-2zM2260 599.6h2V710.3h-2zM2262 603.2h3V718.6h-3zM2265 606.6h3V712.2h-3zM2268 610.1h3V714.6h-3zM2271 608.0h3V732.1h-3zM2274 606.3h4V737.2h-4zM2278 601.4h4V715.3h-4zM2282 608.0h4V737.3h-4zM2286 605.8h4V722.1h-4zM2290 610.7h2V736.5h-2zM2292 609.1h3V716.9h-3zM2295 603.7h4V711.1h-4zM2299 606.7h2V713.0h-2zM2301 606.4h3V723.6h-3zM2304 597.2h3V712.2h-3zM2307 604.2h2V709.8h-2zM2309 606.0h3V717.2h-3zM2312 604.1h4V715.3h-4zM2316 609.3h2V719.2h-2zM2318 595.0h3V721.8h-3zM2321 598.4h3V719.6h-3zM2324 596.5h3V719.9h-3zM2327 600.9h2V711.6h-2zM2329 606.6h2V715.5h-2zM2331 608.3h2V713.8h-2zM2333 596.7h2V734.3h-2zM2335 603.5h3V728.5h-3zM2338 605.8h3V716.8h-3zM2341 602.7h2V719.7h-2zM2343 609.0h2V732.5h-2zM2345 599.5h2V717.1h-2zM2347 607.9h3V715.9h-3zM2350 601.5h3V727.0h-3zM2353 608.2h3V717.0h-3zM2356 605.4h3V718.8h-3zM2359 594.1h2V716.9h-2zM2361 608.6h4V720.6h-4zM2365 605.0h3V739.6h-3zM2368 602.1h3V714.4h-3zM2371 603.5h2V718.7h-2zM2373 610.1h3V718.1h-3zM2376 610.4h2V712.5h-2zM2378 606.5h4V714.1h-4zM2382 593.2h3V728.8h-3zM2385 603.4h3V732.5h-3zM2388 606.3h2V722.1h-2zM2390 608.1h3V714.6h-3zM2393 610.6h3V714.8h-3zM2396 612.2h3V713.0h-3zM2399 611.4h3V713.3h-3zM2402 602.9h3V718.1h-3zM2405 603.5h3V715.1h-3zM2408 599.2h2V730.1h-2zM2410 605.6h2V728.8h-2zM2412 606.1h2V717.5h-2zM2414 598.9h2V713.1h-2zM2416 607.2h3V713.1h-3zM2419 607.0h2V711.8h-2zM2421 588.7h2V716.2h-2zM2423 610.2h3V717.5h-3zM2426 608.0h3V735.8h-3zM2429 606.2h3V726.0h-3zM2432 609.5h4V720.6h-4zM2436 609.8h3V719.9h-3zM2439 603.8h4V712.4h-4zM2443 608.4h2V710.7h-2zM2445 612.8h2V715.4h-2zM2447 613.4h4V725.9h-4zM2451 607.2h2V714.3h-2zM2453 597.8h4V714.4h-4zM2457 608.1h2V711.3h-2zM2459 604.8h2V713.0h-2zM2461 591.0h4V714.2h-4zM2465 606.9h3V724.2h-3zM2468 607.2h4V722.0h-4zM2472 609.9h2V729.3h-2zM2474 595.4h4V711.7h-4zM2478 593.0h2V720.6h-2zM2480 615.3h2V727.4h-2zM2482 624.0h1V694.0h-1z"/>
<rect x="597" y="700" width="5" height="90" fill="#b452e4"/>
<rect x="597.5" y="780" width="4" height="180" fill="#b452e4"/>
<rect x="598" y="950" width="3" height="233" fill="#b452e4"/>
<rect x="599" y="1183" width="1" height="18" fill="#c0283c"/>
<rect x="1642" y="700" width="5" height="120" fill="#b452e4"/>
<rect x="1642.5" y="815" width="4" height="200" fill="#b452e4"/>
<rect x="1643" y="1000" width="3" height="171" fill="#b452e4"/>
<rect x="1644" y="1170" width="1" height="23" fill="#c0283c"/>
<rect x="601" y="612" width="1" height="14" fill="#fff"/>
<rect x="1646" y="598" width="1" height="39" fill="#fff"/>
<path fill="#70c0ea" d="M1543 576h2v10h-2zM1548 574h1v10h-1zM1553 575h1v10h-1z"/>
<path fill="#b452e4" d="M1542 580h4v30h-4zM1547 579h3v30h-3zM1551 580h4v30h-4zM1541 700h5v42h-5zM1547 700h3v45h-3zM1551 700h4v42h-4z"/>
</g>
<g shape-rendering="crispEdges" fill="#666">
<rect x="431" y="228" width="2" height="1057"/>
<rect x="431" y="1283" width="2090" height="2"/>
<rect x="524" y="1278" width="2" height="5"/>
<rect x="915" y="1278" width="2" height="5"/>
<rect x="1306" y="1278" width="2" height="5"/>
<rect x="1698" y="1278" width="2" height="5"/>
<rect x="2089" y="1278" width="2" height="5"/>
<rect x="2480" y="1278" width="2" height="5"/>
<rect x="622" y="1281" width="2" height="2"/>
<rect x="719" y="1281" width="2" height="2"/>
<rect x="817" y="1281" width="2" height="2"/>
<rect x="1013" y="1281" width="2" height="2"/>
<rect x="1111" y="1281" width="2" height="2"/>
<rect x="1209" y="1281" width="2" height="2"/>
<rect x="1404" y="1281" width="2" height="2"/>
<rect x="1502" y="1281" width="2" height="2"/>
<rect x="1600" y="1281" width="2" height="2"/>
<rect x="1795" y="1281" width="2" height="2"/>
<rect x="1893" y="1281" width="2" height="2"/>
<rect x="1991" y="1281" width="2" height="2"/>
<rect x="2187" y="1281" width="2" height="2"/>
<rect x="2285" y="1281" width="2" height="2"/>
<rect x="2382" y="1281" width="2" height="2"/>
<rect x="433" y="1271" width="3" height="2"/>
<rect x="433" y="1225" width="3" height="2"/>
<rect x="433" y="1179" width="3" height="2"/>
<rect x="433" y="1133" width="3" height="2"/>
<rect x="433" y="1087" width="5" height="2"/>
<rect x="433" y="1041" width="3" height="2"/>
<rect x="433" y="995" width="3" height="2"/>
<rect x="433" y="949" width="3" height="2"/>
<rect x="433" y="903" width="3" height="2"/>
<rect x="433" y="857" width="5" height="2"/>
<rect x="433" y="811" width="3" height="2"/>
<rect x="433" y="765" width="3" height="2"/>
<rect x="433" y="719" width="3" height="2"/>
<rect x="433" y="673" width="3" height="2"/>
<rect x="433" y="628" width="5" height="2"/>
<rect x="433" y="582" width="3" height="2"/>
<rect x="433" y="536" width="3" height="2"/>
<rect x="433" y="490" width="3" height="2"/>
<rect x="433" y="444" width="3" height="2"/>
<rect x="433" y="398" width="5" height="2"/>
<rect x="433" y="352" width="3" height="2"/>
<rect x="433" y="306" width="3" height="2"/>
<rect x="433" y="260" width="3" height="2"/>
</g>
</svg>
<div class="t" style="left:424.8px;width:200px;text-align:center;top:1289px;font-size:15px;color:#000">0</div>
<div class="t" style="left:816.1px;width:200px;text-align:center;top:1289px;font-size:15px;color:#000">20,000,000</div>
<div class="t" style="left:1207.4px;width:200px;text-align:center;top:1289px;font-size:15px;color:#000">40,000,000</div>
<div class="t" style="left:1598.6px;width:200px;text-align:center;top:1289px;font-size:15px;color:#000">60,000,000</div>
<div class="t" style="left:1989.9px;width:200px;text-align:center;top:1289px;font-size:15px;color:#000">80,000,000</div>
<div class="t" style="left:2381.2px;width:200px;text-align:center;top:1289px;font-size:15px;color:#000">100,000,000</div>
<div class="t" style="left:326px;width:100px;text-align:right;top:389.8px;font-size:15px;color:#000">25</div>
<div class="t" style="left:326px;width:100px;text-align:right;top:619.5px;font-size:15px;color:#000">0</div>
<div class="t" style="left:326px;width:100px;text-align:right;top:849.2px;font-size:15px;color:#000">-25</div>
<div class="t" style="left:326px;width:100px;text-align:right;top:1079.0px;font-size:15px;color:#000">-50</div>
<div class="t" style="left:1375px;width:200px;text-align:center;top:1312px;font-size:15px;color:#000">t [ns]</div>
<div class="t" style="left:333px;width:100px;text-align:center;top:750px;font-size:15px;color:#000;transform:rotate(-90deg);transform-origin:50px 8px">Amplitude [mV]</div>
<div class="a" style="left:2407px;top:242px;width:104px;height:93px;background:#fff;border:1px solid #000"></div>
<div class="a" style="left:2413px;top:246px;width:34px;height:20px;border:3px solid #0000ff"></div>
<div class="a" style="left:2416px;top:256px;width:28px;height:1px;background:#b450e0"></div>
<div class="t" style="left:2453px;top:249px;font-size:13.3px;color:#0000ff">DEED 1</div>
<div class="a" style="left:2414px;top:279px;width:32px;height:1px;background:#a81434"></div>
<div class="t" style="left:2453px;top:272px;font-size:10.7px;color:#000">DEED 2</div>
<div class="a" style="left:2414px;top:300px;width:32px;height:1px;background:#6cbde8"></div>
<div class="t" style="left:2453px;top:293px;font-size:10.7px;color:#000">DEED 3</div>
<div class="a" style="left:2414px;top:321px;width:32px;height:1px;background:#7a6330"></div>
<div class="t" style="left:2453px;top:314px;font-size:10.7px;color:#000">DEED 4</div>
<div class="btn ui" style="left:369px;top:1343px;width:427px;height:34px;line-height:34px">Previous trigger</div>
<div class="btn ui" style="left:2108px;top:1343px;width:427px;height:34px;line-height:34px">Next trigger</div>
<div class="a" style="left:0;top:1402px;width:2560px;height:1px;background:#575757"></div>
<div class="a" style="left:0;top:1403px;width:2560px;height:37px;background:linear-gradient(#ededed,#dcdcdc)"></div>
<div class="a" style="left:5px;top:1408px;width:30px;height:27px;border:1px solid #c6c6c6;border-radius:3px;background:#ececec"><svg width="28" height="25" style="position:absolute;left:0;top:0"><path d="M9 12.5 H12.5 M9 11.5 V19.5 H16 V16" stroke="#1c1c1c" stroke-width="2.2" fill="none"/><rect x="15" y="7.5" width="6" height="6" fill="none" stroke="#1c1c1c" stroke-width="2.2"/></svg></div>
<div class="task" style="left:40px;width:263px;top:1406px;height:30px;line-height:30px;padding-left:34px">2024_HVCurrents.ods - LibreOffice...</div>
<svg class="a" style="left:49px;top:1410px" width="21" height="24"><path d="M1 1 H14 L20 7 V23 H1 Z" fill="#fff" stroke="#2a9a2a" stroke-width="1.6"/><path d="M14 1 H20 V7 Z" fill="#1a8c1a"/><rect x="4" y="10" width="12" height="10" fill="#6cc04a"/><path d="M4 13H16M4 16H16M8 10V20M12 10V20" stroke="#dff0d8" stroke-width="0.8"/><rect x="10" y="15" width="2" height="5" fill="#3aa0e0"/><rect x="13" y="13" width="2" height="7" fill="#f0a030"/></svg>
<div class="task" style="left:307px;width:264px;top:1406px;height:30px;line-height:30px;padding-left:34px;color:#8f9192">[Converted from /qualiacspool/wcer...</div>
<svg class="a" style="left:316px;top:1411px" width="20" height="22"><rect x="1" y="1" width="18" height="20" rx="2" fill="#f4f4f4" stroke="#d8d8d8"/><path d="M3 11 C6 2,12 4,8 9 C6 12,13 12,18 8" stroke="#e07070" stroke-width="1" fill="none"/><path d="M3 15H17M3 17H15" stroke="#d8d8d8" stroke-width="0.8"/></svg>
<div class="task" style="left:575px;width:264px;top:1406px;height:30px;line-height:30px;padding-left:34px;background:#cdcdcd;border-color:#bdbdbd">File display [GL]</div>
<svg class="a" style="left:582px;top:1411px" width="23" height="22"><path d="M1 1V21H22" stroke="#888" stroke-width="0.8" fill="none"/><path d="M3 20 C8 16,10 18,14 10 C16 6,18 4,20 3 V20 Z" fill="#f8d8e8"/><path d="M3 20 C8 18,12 18,20 12 V20 Z" fill="#c8d8f8"/><path d="M3 16 C8 14,10 15,14 8 C16 5,18 3,20 2" stroke="#d04060" stroke-width="1" fill="none"/><path d="M3 18 C8 16,12 16,20 11" stroke="#c040c0" stroke-width="1.2" fill="none"/></svg>
<div class="task" style="left:843px;width:264px;top:1406px;height:30px;line-height:30px;padding-left:34px">EAR2_Beam_Profile_40K.pdf — Mo...</div>
<svg class="a" style="left:850px;top:1410px" width="24" height="24"><defs><radialGradient id="ff" cx="0.6" cy="0.2" r="0.9"><stop offset="0" stop-color="#ffe040"/><stop offset="0.45" stop-color="#ff8a20"/><stop offset="0.8" stop-color="#f03a50"/><stop offset="1" stop-color="#e0206a"/></radialGradient></defs><circle cx="12" cy="13" r="10.5" fill="url(#ff)"/><path d="M15 2 C20 5,22 9,22 13 C20 8,17 6,15 2Z" fill="#ffd030"/><circle cx="12" cy="13" r="5" fill="#7040d8"/><path d="M7 10 C10 8,14 9,15 11 C12 10,9 11,7 13Z" fill="#ff9a30"/></svg>
<div class="task" style="left:1111px;width:263px;top:1406px;height:30px;line-height:30px;padding-left:34px">File display [GL]</div>
<svg class="a" style="left:1118px;top:1411px" width="23" height="22"><path d="M1 1V21H22" stroke="#888" stroke-width="0.8" fill="none"/><path d="M3 20 C8 16,10 18,14 10 C16 6,18 4,20 3 V20 Z" fill="#f8d8e8"/><path d="M3 20 C8 18,12 18,20 12 V20 Z" fill="#c8d8f8"/><path d="M3 16 C8 14,10 15,14 8 C16 5,18 3,20 2" stroke="#d04060" stroke-width="1" fill="none"/><path d="M3 18 C8 16,12 16,20 11" stroke="#c040c0" stroke-width="1.2" fill="none"/></svg>
<div class="a" style="left:2323px;top:1409px;width:53px;height:26px;background:#f6f5f4;border:2px solid #6e6e6e;border-radius:1px"></div>
<div class="a" style="left:2379px;top:1408px;width:55px;height:27px;background:#dedede;border:1px solid #d2d2d2"></div>
<div class="a" style="left:2436px;top:1408px;width:54px;height:27px;background:#dedede;border:1px solid #d2d2d2"></div>
<div class="a" style="left:2493px;top:1408px;width:54px;height:27px;background:#dedede;border:1px solid #d2d2d2;border-radius:0 3px 3px 0"></div>
<!-- top panel icons -->
<svg class="a" style="left:8px;top:5px" width="17" height="17"><g transform="translate(8.5,8.5)"><rect x="-6" y="-6" width="5" height="5" fill="#8cd43a"/><rect x="1" y="-6" width="5" height="5" fill="#9c3a9c"/><rect x="-6" y="1" width="5" height="5" fill="#2a2a9a"/><rect x="1" y="1" width="5" height="5" fill="#f0a030"/><path d="M0 -8 L2 -6 H-2Z" fill="#f0a030"/><path d="M8 0 L6 2 V-2Z" fill="#2a2a9a"/><path d="M0 8 L-2 6 H2Z" fill="#8cd43a"/><path d="M-8 0 L-6 -2 V2Z" fill="#9c3a9c"/></g></svg>
<svg class="a" style="left:2439px;top:8px" width="10" height="10"><circle cx="4.8" cy="4.9" r="4" fill="#2e3436"/></svg>
<svg class="a" style="left:2472px;top:5px" width="18" height="17"><g fill="#2e3436"><rect x="6" y="1" width="5" height="4"/><rect x="1" y="11" width="5" height="5"/><rect x="11" y="11" width="5" height="5"/><path d="M8 5V8M3.5 11V8H13.5V11" stroke="#2e3436" stroke-width="1.3" fill="none"/></g></svg>
<svg class="a" style="left:2500px;top:5px" width="18" height="17"><path d="M1 6H4L8 2V15L4 11H1Z" fill="#2e3436"/><path d="M10 6 Q12 8.5 10 11" stroke="#2e3436" stroke-width="1.4" fill="none"/><path d="M12 4 Q15.5 8.5 12 13" stroke="#9a9a9a" stroke-width="1.3" fill="none"/><path d="M14 2 Q19 8.5 14 15" stroke="#b0b0b0" stroke-width="1.2" fill="none"/></svg>
<svg class="a" style="left:2529px;top:4px" width="17" height="17"><path d="M4.5 4.5 A6 6 0 1 0 11.5 4.5" stroke="#2e3436" stroke-width="1.6" fill="none"/><path d="M8 1V9" stroke="#2e3436" stroke-width="1.6"/></svg>
<!-- title buttons -->
<div class="a" style="left:2470px;top:47px;width:8px;height:3px;background:#1e1e1e"></div>
<div class="a" style="left:2505px;top:43px;width:7px;height:7px;border:2px solid #1e1e1e"></div>
<svg class="a" style="left:2537px;top:41px" width="11" height="11"><path d="M1.5 1.5L9.5 9.5M9.5 1.5L1.5 9.5" stroke="#1e1e1e" stroke-width="2"/></svg>

</body></html>
